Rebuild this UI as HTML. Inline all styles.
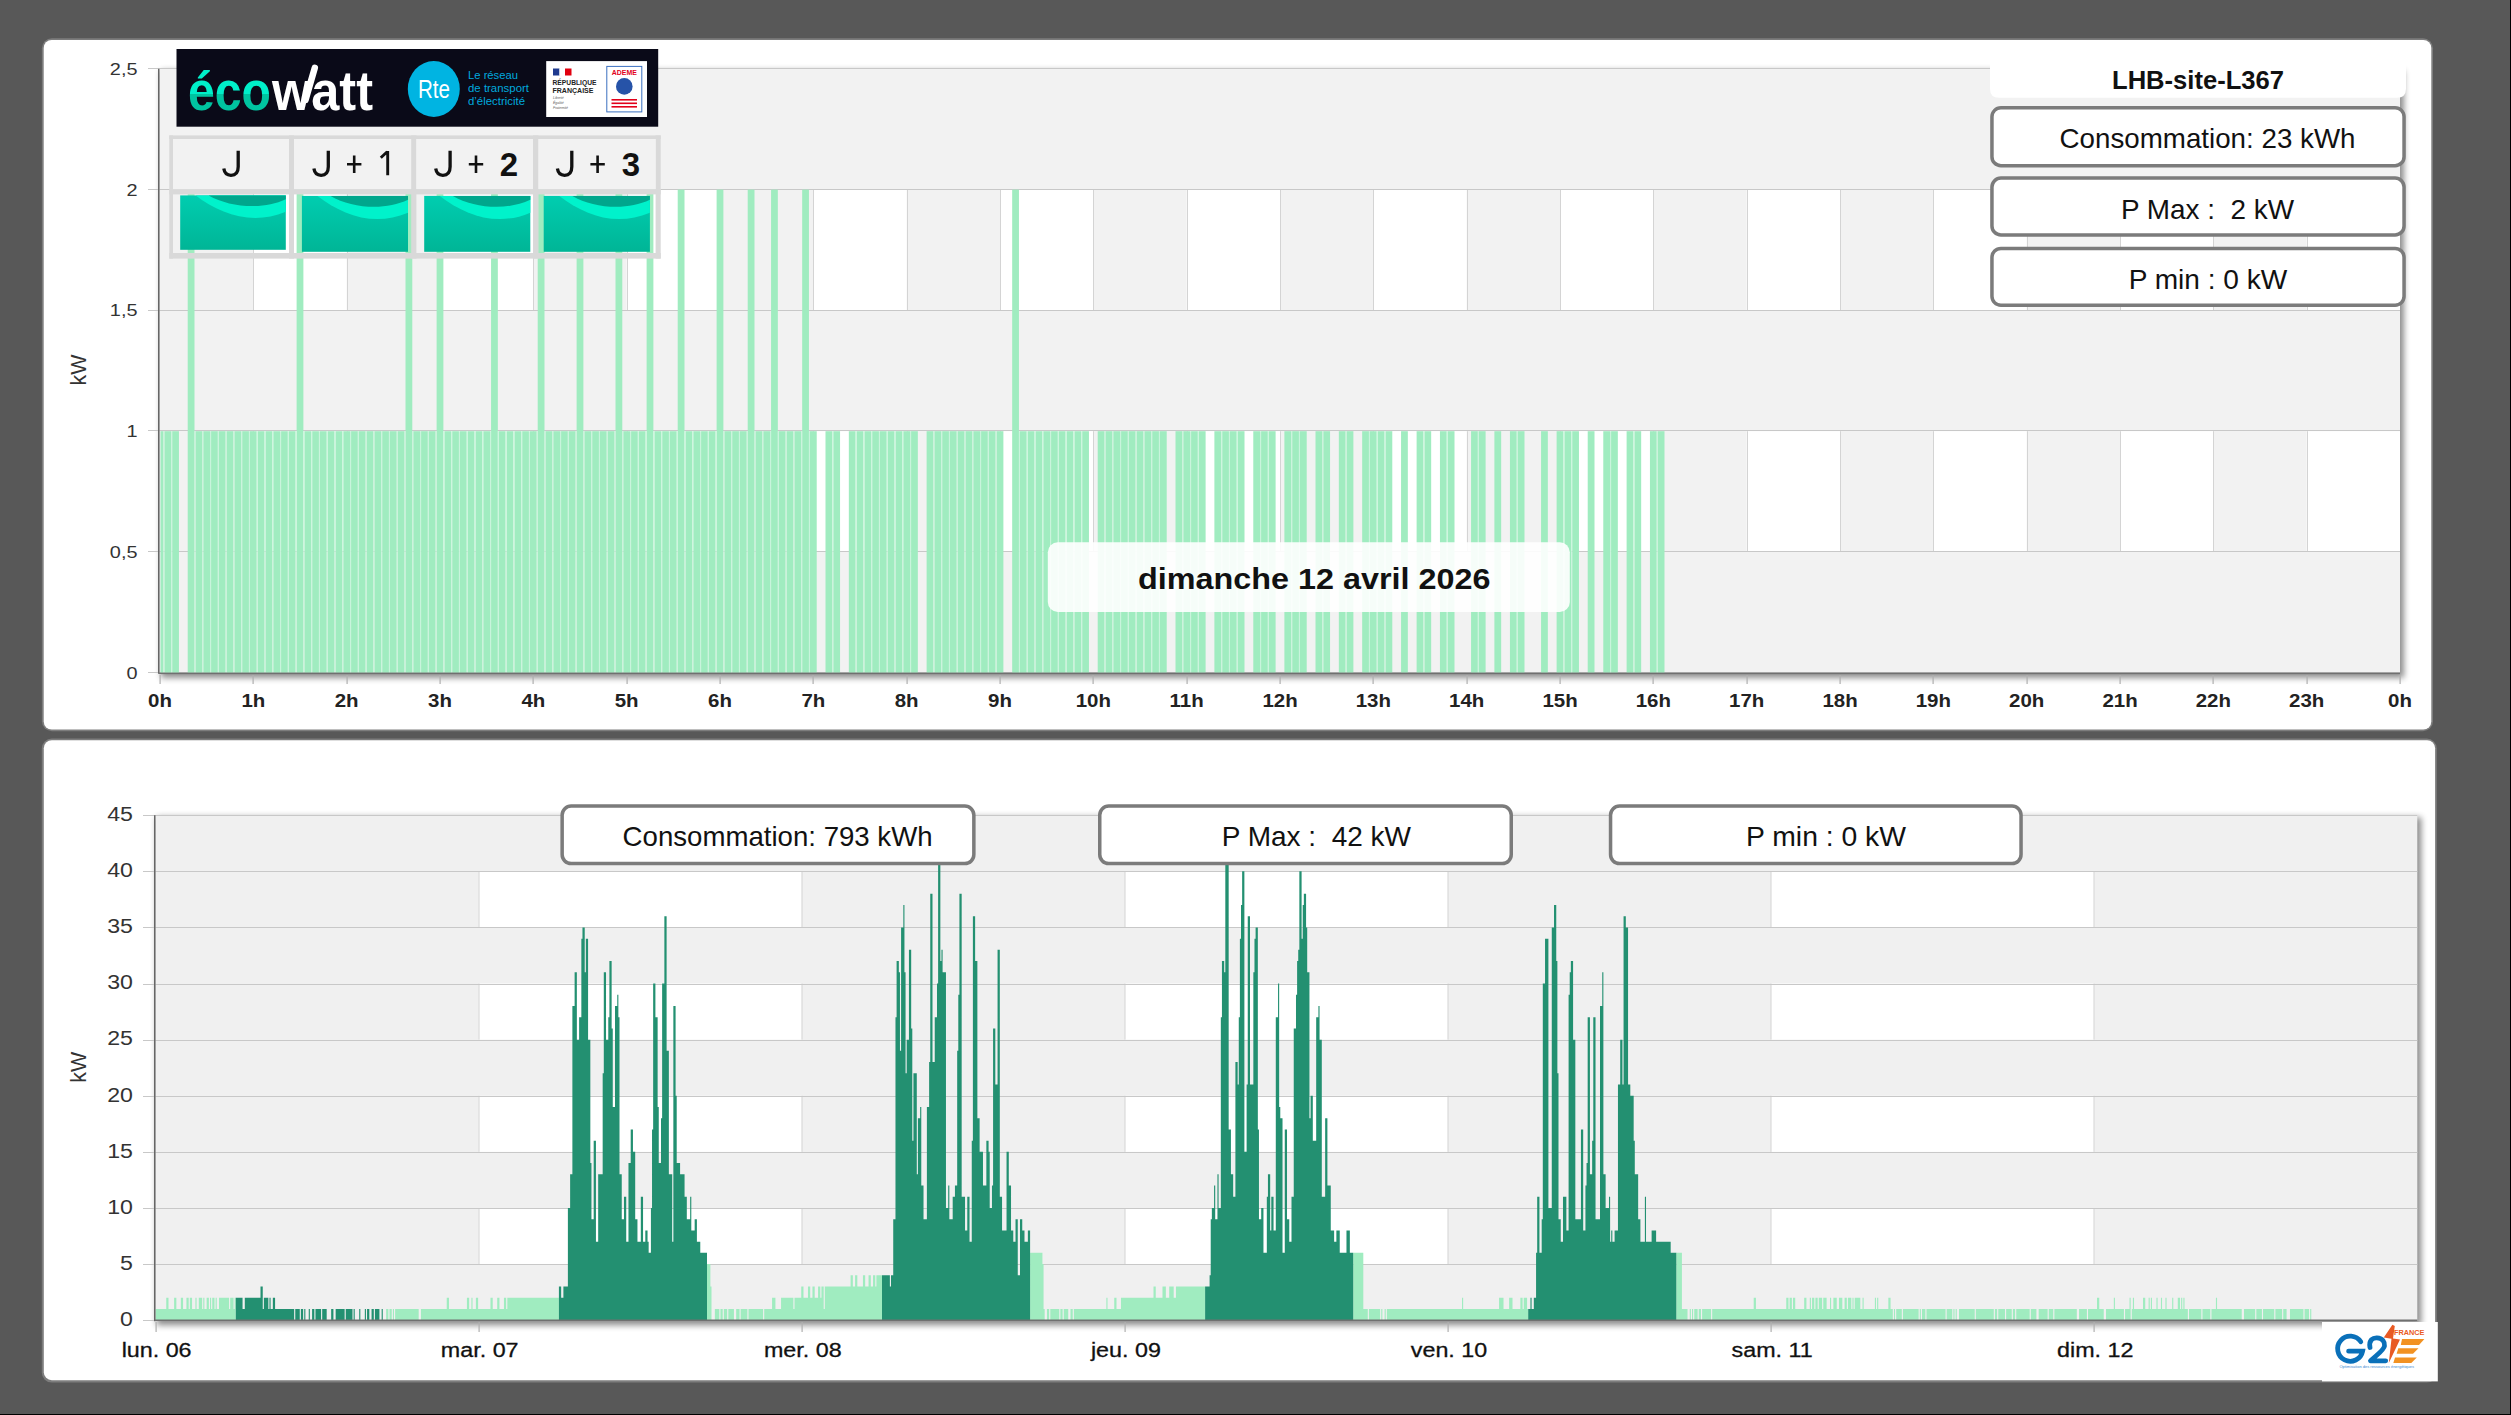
<!DOCTYPE html><html><head><meta charset="utf-8"><title>chart</title><style>html,body{margin:0;padding:0;background:#585858;width:2511px;height:1415px;overflow:hidden}svg{position:absolute;left:0;top:0;display:block}</style></head><body>
<svg width="2511" height="1415" viewBox="0 0 2511 1415" font-family="Liberation Sans, sans-serif">
<defs><linearGradient id="tealg" x1="0" y1="0" x2="0" y2="1"><stop offset="0" stop-color="#00cdb0"/><stop offset="1" stop-color="#00b596"/></linearGradient><linearGradient id="ecog" x1="0" y1="0" x2="0" y2="1"><stop offset="0" stop-color="#00efc9"/><stop offset="0.56" stop-color="#00efc9"/><stop offset="0.56" stop-color="#00c4a0"/><stop offset="1" stop-color="#00c4a0"/></linearGradient><filter id="blur1" x="-5%" y="-5%" width="110%" height="110%"><feGaussianBlur stdDeviation="1.2"/></filter><filter id="shb" x="-2%" y="-5%" width="104%" height="110%"><feGaussianBlur stdDeviation="3.2"/></filter></defs>
<rect x="0" y="0" width="2511" height="1415" fill="#585858"/>
<rect x="0" y="1414" width="2511" height="1" fill="#000"/>
<rect x="2510" y="0" width="1" height="1415" fill="#000"/>
<rect x="41.9" y="38.2" width="2391.1" height="693.1" rx="10" fill="#7d7d7d"/>
<rect x="43.7" y="40" width="2387.6" height="689.6" rx="8" fill="#fff"/>
<rect x="41.8" y="738.5" width="2395" height="644.1" rx="10" fill="#7d7d7d"/>
<rect x="43.8" y="740.2" width="2391.3" height="640" rx="8" fill="#fff"/>
<rect x="161.0" y="70.8" width="2243.0" height="607" fill="#000" opacity="0.45" filter="url(#shb)"/>
<rect x="160.0" y="68.8" width="2240.0" height="604" fill="#f2f2f2"/>
<rect x="253.33" y="431.2" width="93.33" height="120.8" fill="#fff"/>
<rect x="440" y="431.2" width="93.33" height="120.8" fill="#fff"/>
<rect x="626.67" y="431.2" width="93.33" height="120.8" fill="#fff"/>
<rect x="813.33" y="431.2" width="93.33" height="120.8" fill="#fff"/>
<rect x="1000" y="431.2" width="93.33" height="120.8" fill="#fff"/>
<rect x="1186.67" y="431.2" width="93.33" height="120.8" fill="#fff"/>
<rect x="1373.33" y="431.2" width="93.33" height="120.8" fill="#fff"/>
<rect x="1560" y="431.2" width="93.33" height="120.8" fill="#fff"/>
<rect x="1746.67" y="431.2" width="93.33" height="120.8" fill="#fff"/>
<rect x="1933.33" y="431.2" width="93.33" height="120.8" fill="#fff"/>
<rect x="2120" y="431.2" width="93.33" height="120.8" fill="#fff"/>
<rect x="2306.67" y="431.2" width="93.33" height="120.8" fill="#fff"/>
<rect x="253.33" y="189.6" width="93.33" height="120.8" fill="#fff"/>
<rect x="440" y="189.6" width="93.33" height="120.8" fill="#fff"/>
<rect x="626.67" y="189.6" width="93.33" height="120.8" fill="#fff"/>
<rect x="813.33" y="189.6" width="93.33" height="120.8" fill="#fff"/>
<rect x="1000" y="189.6" width="93.33" height="120.8" fill="#fff"/>
<rect x="1186.67" y="189.6" width="93.33" height="120.8" fill="#fff"/>
<rect x="1373.33" y="189.6" width="93.33" height="120.8" fill="#fff"/>
<rect x="1560" y="189.6" width="93.33" height="120.8" fill="#fff"/>
<rect x="1746.67" y="189.6" width="93.33" height="120.8" fill="#fff"/>
<rect x="1933.33" y="189.6" width="93.33" height="120.8" fill="#fff"/>
<rect x="2120" y="189.6" width="93.33" height="120.8" fill="#fff"/>
<rect x="2306.67" y="189.6" width="93.33" height="120.8" fill="#fff"/>
<rect x="253.0" y="431.2" width="1" height="120.8" fill="#d4d4d4"/>
<rect x="347.0" y="431.2" width="1" height="120.8" fill="#d4d4d4"/>
<rect x="440.0" y="431.2" width="1" height="120.8" fill="#d4d4d4"/>
<rect x="533.0" y="431.2" width="1" height="120.8" fill="#d4d4d4"/>
<rect x="627.0" y="431.2" width="1" height="120.8" fill="#d4d4d4"/>
<rect x="720.0" y="431.2" width="1" height="120.8" fill="#d4d4d4"/>
<rect x="813.0" y="431.2" width="1" height="120.8" fill="#d4d4d4"/>
<rect x="907.0" y="431.2" width="1" height="120.8" fill="#d4d4d4"/>
<rect x="1000.0" y="431.2" width="1" height="120.8" fill="#d4d4d4"/>
<rect x="1093.0" y="431.2" width="1" height="120.8" fill="#d4d4d4"/>
<rect x="1187.0" y="431.2" width="1" height="120.8" fill="#d4d4d4"/>
<rect x="1280.0" y="431.2" width="1" height="120.8" fill="#d4d4d4"/>
<rect x="1373.0" y="431.2" width="1" height="120.8" fill="#d4d4d4"/>
<rect x="1467.0" y="431.2" width="1" height="120.8" fill="#d4d4d4"/>
<rect x="1560.0" y="431.2" width="1" height="120.8" fill="#d4d4d4"/>
<rect x="1653.0" y="431.2" width="1" height="120.8" fill="#d4d4d4"/>
<rect x="1747.0" y="431.2" width="1" height="120.8" fill="#d4d4d4"/>
<rect x="1840.0" y="431.2" width="1" height="120.8" fill="#d4d4d4"/>
<rect x="1933.0" y="431.2" width="1" height="120.8" fill="#d4d4d4"/>
<rect x="2027.0" y="431.2" width="1" height="120.8" fill="#d4d4d4"/>
<rect x="2120.0" y="431.2" width="1" height="120.8" fill="#d4d4d4"/>
<rect x="2213.0" y="431.2" width="1" height="120.8" fill="#d4d4d4"/>
<rect x="2307.0" y="431.2" width="1" height="120.8" fill="#d4d4d4"/>
<rect x="253.0" y="189.6" width="1" height="120.8" fill="#d4d4d4"/>
<rect x="347.0" y="189.6" width="1" height="120.8" fill="#d4d4d4"/>
<rect x="440.0" y="189.6" width="1" height="120.8" fill="#d4d4d4"/>
<rect x="533.0" y="189.6" width="1" height="120.8" fill="#d4d4d4"/>
<rect x="627.0" y="189.6" width="1" height="120.8" fill="#d4d4d4"/>
<rect x="720.0" y="189.6" width="1" height="120.8" fill="#d4d4d4"/>
<rect x="813.0" y="189.6" width="1" height="120.8" fill="#d4d4d4"/>
<rect x="907.0" y="189.6" width="1" height="120.8" fill="#d4d4d4"/>
<rect x="1000.0" y="189.6" width="1" height="120.8" fill="#d4d4d4"/>
<rect x="1093.0" y="189.6" width="1" height="120.8" fill="#d4d4d4"/>
<rect x="1187.0" y="189.6" width="1" height="120.8" fill="#d4d4d4"/>
<rect x="1280.0" y="189.6" width="1" height="120.8" fill="#d4d4d4"/>
<rect x="1373.0" y="189.6" width="1" height="120.8" fill="#d4d4d4"/>
<rect x="1467.0" y="189.6" width="1" height="120.8" fill="#d4d4d4"/>
<rect x="1560.0" y="189.6" width="1" height="120.8" fill="#d4d4d4"/>
<rect x="1653.0" y="189.6" width="1" height="120.8" fill="#d4d4d4"/>
<rect x="1747.0" y="189.6" width="1" height="120.8" fill="#d4d4d4"/>
<rect x="1840.0" y="189.6" width="1" height="120.8" fill="#d4d4d4"/>
<rect x="1933.0" y="189.6" width="1" height="120.8" fill="#d4d4d4"/>
<rect x="2027.0" y="189.6" width="1" height="120.8" fill="#d4d4d4"/>
<rect x="2120.0" y="189.6" width="1" height="120.8" fill="#d4d4d4"/>
<rect x="2213.0" y="189.6" width="1" height="120.8" fill="#d4d4d4"/>
<rect x="2307.0" y="189.6" width="1" height="120.8" fill="#d4d4d4"/>
<rect x="148" y="672" width="2252.0" height="1" fill="#c8c8c8"/>
<rect x="148" y="551" width="2252.0" height="1" fill="#c8c8c8"/>
<rect x="148" y="430" width="2252.0" height="1" fill="#c8c8c8"/>
<rect x="148" y="310" width="2252.0" height="1" fill="#c8c8c8"/>
<rect x="148" y="189" width="2252.0" height="1" fill="#c8c8c8"/>
<rect x="148" y="68" width="2252.0" height="1" fill="#c8c8c8"/>
<g fill="#a0ecc0">
<rect x="160.5" y="431.2" width="2.89" height="241.6"/>
<rect x="164.39" y="431.2" width="6.78" height="241.6"/>
<rect x="172.17" y="431.2" width="6.78" height="241.6"/>
<rect x="187.72" y="189.6" width="6.78" height="483.2"/>
<rect x="195.5" y="431.2" width="6.78" height="241.6"/>
<rect x="203.28" y="431.2" width="6.78" height="241.6"/>
<rect x="211.06" y="431.2" width="6.78" height="241.6"/>
<rect x="218.83" y="431.2" width="6.78" height="241.6"/>
<rect x="226.61" y="431.2" width="6.78" height="241.6"/>
<rect x="234.39" y="431.2" width="6.78" height="241.6"/>
<rect x="242.17" y="431.2" width="6.78" height="241.6"/>
<rect x="249.94" y="431.2" width="6.78" height="241.6"/>
<rect x="257.72" y="431.2" width="6.78" height="241.6"/>
<rect x="265.5" y="431.2" width="6.78" height="241.6"/>
<rect x="273.28" y="431.2" width="6.78" height="241.6"/>
<rect x="281.06" y="431.2" width="6.78" height="241.6"/>
<rect x="288.83" y="431.2" width="6.78" height="241.6"/>
<rect x="296.61" y="189.6" width="6.78" height="483.2"/>
<rect x="304.39" y="431.2" width="6.78" height="241.6"/>
<rect x="312.17" y="431.2" width="6.78" height="241.6"/>
<rect x="319.94" y="431.2" width="6.78" height="241.6"/>
<rect x="327.72" y="431.2" width="6.78" height="241.6"/>
<rect x="335.5" y="431.2" width="6.78" height="241.6"/>
<rect x="343.28" y="431.2" width="6.78" height="241.6"/>
<rect x="351.06" y="431.2" width="6.78" height="241.6"/>
<rect x="358.83" y="431.2" width="6.78" height="241.6"/>
<rect x="366.61" y="431.2" width="6.78" height="241.6"/>
<rect x="374.39" y="431.2" width="6.78" height="241.6"/>
<rect x="382.17" y="431.2" width="6.78" height="241.6"/>
<rect x="389.94" y="431.2" width="6.78" height="241.6"/>
<rect x="397.72" y="431.2" width="6.78" height="241.6"/>
<rect x="405.5" y="189.6" width="6.78" height="483.2"/>
<rect x="413.28" y="431.2" width="6.78" height="241.6"/>
<rect x="421.06" y="431.2" width="6.78" height="241.6"/>
<rect x="428.83" y="431.2" width="6.78" height="241.6"/>
<rect x="436.61" y="189.6" width="6.78" height="483.2"/>
<rect x="444.39" y="431.2" width="6.78" height="241.6"/>
<rect x="452.17" y="431.2" width="6.78" height="241.6"/>
<rect x="459.94" y="431.2" width="6.78" height="241.6"/>
<rect x="467.72" y="431.2" width="6.78" height="241.6"/>
<rect x="475.5" y="431.2" width="6.78" height="241.6"/>
<rect x="483.28" y="431.2" width="6.78" height="241.6"/>
<rect x="491.06" y="189.6" width="6.78" height="483.2"/>
<rect x="498.83" y="431.2" width="6.78" height="241.6"/>
<rect x="506.61" y="431.2" width="6.78" height="241.6"/>
<rect x="514.39" y="431.2" width="6.78" height="241.6"/>
<rect x="522.17" y="431.2" width="6.78" height="241.6"/>
<rect x="529.94" y="431.2" width="6.78" height="241.6"/>
<rect x="537.72" y="189.6" width="6.78" height="483.2"/>
<rect x="545.5" y="431.2" width="6.78" height="241.6"/>
<rect x="553.28" y="431.2" width="6.78" height="241.6"/>
<rect x="561.06" y="431.2" width="6.78" height="241.6"/>
<rect x="568.83" y="431.2" width="6.78" height="241.6"/>
<rect x="576.61" y="189.6" width="6.78" height="483.2"/>
<rect x="584.39" y="431.2" width="6.78" height="241.6"/>
<rect x="592.17" y="431.2" width="6.78" height="241.6"/>
<rect x="599.94" y="431.2" width="6.78" height="241.6"/>
<rect x="607.72" y="431.2" width="6.78" height="241.6"/>
<rect x="615.5" y="189.6" width="6.78" height="483.2"/>
<rect x="623.28" y="431.2" width="6.78" height="241.6"/>
<rect x="631.06" y="431.2" width="6.78" height="241.6"/>
<rect x="638.83" y="431.2" width="6.78" height="241.6"/>
<rect x="646.61" y="189.6" width="6.78" height="483.2"/>
<rect x="654.39" y="431.2" width="6.78" height="241.6"/>
<rect x="662.17" y="431.2" width="6.78" height="241.6"/>
<rect x="669.94" y="431.2" width="6.78" height="241.6"/>
<rect x="677.72" y="189.6" width="6.78" height="483.2"/>
<rect x="685.5" y="431.2" width="6.78" height="241.6"/>
<rect x="693.28" y="431.2" width="6.78" height="241.6"/>
<rect x="701.06" y="431.2" width="6.78" height="241.6"/>
<rect x="708.83" y="431.2" width="6.78" height="241.6"/>
<rect x="716.61" y="189.6" width="6.78" height="483.2"/>
<rect x="724.39" y="431.2" width="6.78" height="241.6"/>
<rect x="732.17" y="431.2" width="6.78" height="241.6"/>
<rect x="739.94" y="431.2" width="6.78" height="241.6"/>
<rect x="747.72" y="189.6" width="6.78" height="483.2"/>
<rect x="755.5" y="431.2" width="6.78" height="241.6"/>
<rect x="763.28" y="431.2" width="6.78" height="241.6"/>
<rect x="771.06" y="189.6" width="6.78" height="483.2"/>
<rect x="778.83" y="431.2" width="6.78" height="241.6"/>
<rect x="786.61" y="431.2" width="6.78" height="241.6"/>
<rect x="794.39" y="431.2" width="6.78" height="241.6"/>
<rect x="802.17" y="189.6" width="6.78" height="483.2"/>
<rect x="809.94" y="431.2" width="6.78" height="241.6"/>
<rect x="825.5" y="431.2" width="6.78" height="241.6"/>
<rect x="833.28" y="431.2" width="6.78" height="241.6"/>
<rect x="848.83" y="431.2" width="6.78" height="241.6"/>
<rect x="856.61" y="431.2" width="6.78" height="241.6"/>
<rect x="864.39" y="431.2" width="6.78" height="241.6"/>
<rect x="872.17" y="431.2" width="6.78" height="241.6"/>
<rect x="879.94" y="431.2" width="6.78" height="241.6"/>
<rect x="887.72" y="431.2" width="6.78" height="241.6"/>
<rect x="895.5" y="431.2" width="6.78" height="241.6"/>
<rect x="903.28" y="431.2" width="6.78" height="241.6"/>
<rect x="911.06" y="431.2" width="6.78" height="241.6"/>
<rect x="926.61" y="431.2" width="6.78" height="241.6"/>
<rect x="934.39" y="431.2" width="6.78" height="241.6"/>
<rect x="942.17" y="431.2" width="6.78" height="241.6"/>
<rect x="949.94" y="431.2" width="6.78" height="241.6"/>
<rect x="957.72" y="431.2" width="6.78" height="241.6"/>
<rect x="965.5" y="431.2" width="6.78" height="241.6"/>
<rect x="973.28" y="431.2" width="6.78" height="241.6"/>
<rect x="981.06" y="431.2" width="6.78" height="241.6"/>
<rect x="988.83" y="431.2" width="6.78" height="241.6"/>
<rect x="996.61" y="431.2" width="6.78" height="241.6"/>
<rect x="1012.17" y="189.6" width="6.78" height="483.2"/>
<rect x="1019.94" y="431.2" width="6.78" height="241.6"/>
<rect x="1027.72" y="431.2" width="6.78" height="241.6"/>
<rect x="1035.5" y="431.2" width="6.78" height="241.6"/>
<rect x="1043.28" y="431.2" width="6.78" height="241.6"/>
<rect x="1051.06" y="431.2" width="6.78" height="241.6"/>
<rect x="1058.83" y="431.2" width="6.78" height="241.6"/>
<rect x="1066.61" y="431.2" width="6.78" height="241.6"/>
<rect x="1074.39" y="431.2" width="6.78" height="241.6"/>
<rect x="1082.17" y="431.2" width="6.78" height="241.6"/>
<rect x="1097.72" y="431.2" width="6.78" height="241.6"/>
<rect x="1105.5" y="431.2" width="6.78" height="241.6"/>
<rect x="1113.28" y="431.2" width="6.78" height="241.6"/>
<rect x="1121.06" y="431.2" width="6.78" height="241.6"/>
<rect x="1128.83" y="431.2" width="6.78" height="241.6"/>
<rect x="1136.61" y="431.2" width="6.78" height="241.6"/>
<rect x="1144.39" y="431.2" width="6.78" height="241.6"/>
<rect x="1152.17" y="431.2" width="6.78" height="241.6"/>
<rect x="1159.94" y="431.2" width="6.78" height="241.6"/>
<rect x="1175.5" y="431.2" width="6.78" height="241.6"/>
<rect x="1183.28" y="431.2" width="6.78" height="241.6"/>
<rect x="1191.06" y="431.2" width="6.78" height="241.6"/>
<rect x="1198.83" y="431.2" width="6.78" height="241.6"/>
<rect x="1214.39" y="431.2" width="6.78" height="241.6"/>
<rect x="1222.17" y="431.2" width="6.78" height="241.6"/>
<rect x="1229.94" y="431.2" width="6.78" height="241.6"/>
<rect x="1237.72" y="431.2" width="6.78" height="241.6"/>
<rect x="1253.28" y="431.2" width="6.78" height="241.6"/>
<rect x="1261.06" y="431.2" width="6.78" height="241.6"/>
<rect x="1268.83" y="431.2" width="6.78" height="241.6"/>
<rect x="1284.39" y="431.2" width="6.78" height="241.6"/>
<rect x="1292.17" y="431.2" width="6.78" height="241.6"/>
<rect x="1299.94" y="431.2" width="6.78" height="241.6"/>
<rect x="1315.5" y="431.2" width="6.78" height="241.6"/>
<rect x="1323.28" y="431.2" width="6.78" height="241.6"/>
<rect x="1338.83" y="431.2" width="6.78" height="241.6"/>
<rect x="1346.61" y="431.2" width="6.78" height="241.6"/>
<rect x="1362.17" y="431.2" width="6.78" height="241.6"/>
<rect x="1369.94" y="431.2" width="6.78" height="241.6"/>
<rect x="1377.72" y="431.2" width="6.78" height="241.6"/>
<rect x="1385.5" y="431.2" width="6.78" height="241.6"/>
<rect x="1401.06" y="431.2" width="6.78" height="241.6"/>
<rect x="1416.61" y="431.2" width="6.78" height="241.6"/>
<rect x="1424.39" y="431.2" width="6.78" height="241.6"/>
<rect x="1439.94" y="431.2" width="6.78" height="241.6"/>
<rect x="1447.72" y="431.2" width="6.78" height="241.6"/>
<rect x="1471.06" y="431.2" width="6.78" height="241.6"/>
<rect x="1478.83" y="431.2" width="6.78" height="241.6"/>
<rect x="1494.39" y="431.2" width="6.78" height="241.6"/>
<rect x="1509.94" y="431.2" width="6.78" height="241.6"/>
<rect x="1517.72" y="431.2" width="6.78" height="241.6"/>
<rect x="1541.06" y="431.2" width="6.78" height="241.6"/>
<rect x="1556.61" y="431.2" width="6.78" height="241.6"/>
<rect x="1564.39" y="431.2" width="6.78" height="241.6"/>
<rect x="1572.17" y="431.2" width="6.78" height="241.6"/>
<rect x="1587.72" y="431.2" width="6.78" height="241.6"/>
<rect x="1603.28" y="431.2" width="6.78" height="241.6"/>
<rect x="1611.06" y="431.2" width="6.78" height="241.6"/>
<rect x="1626.61" y="431.2" width="6.78" height="241.6"/>
<rect x="1634.39" y="431.2" width="6.78" height="241.6"/>
<rect x="1649.94" y="431.2" width="6.78" height="241.6"/>
<rect x="1657.72" y="431.2" width="6.78" height="241.6"/>
</g>
<g fill="#c6f4da">
<rect x="163.39" y="431.2" width="1" height="241.6"/>
<rect x="171.17" y="431.2" width="1" height="241.6"/>
<rect x="194.5" y="431.2" width="1" height="241.6"/>
<rect x="202.28" y="431.2" width="1" height="241.6"/>
<rect x="210.06" y="431.2" width="1" height="241.6"/>
<rect x="217.83" y="431.2" width="1" height="241.6"/>
<rect x="225.61" y="431.2" width="1" height="241.6"/>
<rect x="233.39" y="431.2" width="1" height="241.6"/>
<rect x="241.17" y="431.2" width="1" height="241.6"/>
<rect x="248.94" y="431.2" width="1" height="241.6"/>
<rect x="256.72" y="431.2" width="1" height="241.6"/>
<rect x="264.5" y="431.2" width="1" height="241.6"/>
<rect x="272.28" y="431.2" width="1" height="241.6"/>
<rect x="280.06" y="431.2" width="1" height="241.6"/>
<rect x="287.83" y="431.2" width="1" height="241.6"/>
<rect x="295.61" y="431.2" width="1" height="241.6"/>
<rect x="303.39" y="431.2" width="1" height="241.6"/>
<rect x="311.17" y="431.2" width="1" height="241.6"/>
<rect x="318.94" y="431.2" width="1" height="241.6"/>
<rect x="326.72" y="431.2" width="1" height="241.6"/>
<rect x="334.5" y="431.2" width="1" height="241.6"/>
<rect x="342.28" y="431.2" width="1" height="241.6"/>
<rect x="350.06" y="431.2" width="1" height="241.6"/>
<rect x="357.83" y="431.2" width="1" height="241.6"/>
<rect x="365.61" y="431.2" width="1" height="241.6"/>
<rect x="373.39" y="431.2" width="1" height="241.6"/>
<rect x="381.17" y="431.2" width="1" height="241.6"/>
<rect x="388.94" y="431.2" width="1" height="241.6"/>
<rect x="396.72" y="431.2" width="1" height="241.6"/>
<rect x="404.5" y="431.2" width="1" height="241.6"/>
<rect x="412.28" y="431.2" width="1" height="241.6"/>
<rect x="420.06" y="431.2" width="1" height="241.6"/>
<rect x="427.83" y="431.2" width="1" height="241.6"/>
<rect x="435.61" y="431.2" width="1" height="241.6"/>
<rect x="443.39" y="431.2" width="1" height="241.6"/>
<rect x="451.17" y="431.2" width="1" height="241.6"/>
<rect x="458.94" y="431.2" width="1" height="241.6"/>
<rect x="466.72" y="431.2" width="1" height="241.6"/>
<rect x="474.5" y="431.2" width="1" height="241.6"/>
<rect x="482.28" y="431.2" width="1" height="241.6"/>
<rect x="490.06" y="431.2" width="1" height="241.6"/>
<rect x="497.83" y="431.2" width="1" height="241.6"/>
<rect x="505.61" y="431.2" width="1" height="241.6"/>
<rect x="513.39" y="431.2" width="1" height="241.6"/>
<rect x="521.17" y="431.2" width="1" height="241.6"/>
<rect x="528.94" y="431.2" width="1" height="241.6"/>
<rect x="536.72" y="431.2" width="1" height="241.6"/>
<rect x="544.5" y="431.2" width="1" height="241.6"/>
<rect x="552.28" y="431.2" width="1" height="241.6"/>
<rect x="560.06" y="431.2" width="1" height="241.6"/>
<rect x="567.83" y="431.2" width="1" height="241.6"/>
<rect x="575.61" y="431.2" width="1" height="241.6"/>
<rect x="583.39" y="431.2" width="1" height="241.6"/>
<rect x="591.17" y="431.2" width="1" height="241.6"/>
<rect x="598.94" y="431.2" width="1" height="241.6"/>
<rect x="606.72" y="431.2" width="1" height="241.6"/>
<rect x="614.5" y="431.2" width="1" height="241.6"/>
<rect x="622.28" y="431.2" width="1" height="241.6"/>
<rect x="630.06" y="431.2" width="1" height="241.6"/>
<rect x="637.83" y="431.2" width="1" height="241.6"/>
<rect x="645.61" y="431.2" width="1" height="241.6"/>
<rect x="653.39" y="431.2" width="1" height="241.6"/>
<rect x="661.17" y="431.2" width="1" height="241.6"/>
<rect x="668.94" y="431.2" width="1" height="241.6"/>
<rect x="676.72" y="431.2" width="1" height="241.6"/>
<rect x="684.5" y="431.2" width="1" height="241.6"/>
<rect x="692.28" y="431.2" width="1" height="241.6"/>
<rect x="700.06" y="431.2" width="1" height="241.6"/>
<rect x="707.83" y="431.2" width="1" height="241.6"/>
<rect x="715.61" y="431.2" width="1" height="241.6"/>
<rect x="723.39" y="431.2" width="1" height="241.6"/>
<rect x="731.17" y="431.2" width="1" height="241.6"/>
<rect x="738.94" y="431.2" width="1" height="241.6"/>
<rect x="746.72" y="431.2" width="1" height="241.6"/>
<rect x="754.5" y="431.2" width="1" height="241.6"/>
<rect x="762.28" y="431.2" width="1" height="241.6"/>
<rect x="770.06" y="431.2" width="1" height="241.6"/>
<rect x="777.83" y="431.2" width="1" height="241.6"/>
<rect x="785.61" y="431.2" width="1" height="241.6"/>
<rect x="793.39" y="431.2" width="1" height="241.6"/>
<rect x="801.17" y="431.2" width="1" height="241.6"/>
<rect x="808.94" y="431.2" width="1" height="241.6"/>
<rect x="832.28" y="431.2" width="1" height="241.6"/>
<rect x="855.61" y="431.2" width="1" height="241.6"/>
<rect x="863.39" y="431.2" width="1" height="241.6"/>
<rect x="871.17" y="431.2" width="1" height="241.6"/>
<rect x="878.94" y="431.2" width="1" height="241.6"/>
<rect x="886.72" y="431.2" width="1" height="241.6"/>
<rect x="894.5" y="431.2" width="1" height="241.6"/>
<rect x="902.28" y="431.2" width="1" height="241.6"/>
<rect x="910.06" y="431.2" width="1" height="241.6"/>
<rect x="933.39" y="431.2" width="1" height="241.6"/>
<rect x="941.17" y="431.2" width="1" height="241.6"/>
<rect x="948.94" y="431.2" width="1" height="241.6"/>
<rect x="956.72" y="431.2" width="1" height="241.6"/>
<rect x="964.5" y="431.2" width="1" height="241.6"/>
<rect x="972.28" y="431.2" width="1" height="241.6"/>
<rect x="980.06" y="431.2" width="1" height="241.6"/>
<rect x="987.83" y="431.2" width="1" height="241.6"/>
<rect x="995.61" y="431.2" width="1" height="241.6"/>
<rect x="1018.94" y="431.2" width="1" height="241.6"/>
<rect x="1026.72" y="431.2" width="1" height="241.6"/>
<rect x="1034.5" y="431.2" width="1" height="241.6"/>
<rect x="1042.28" y="431.2" width="1" height="241.6"/>
<rect x="1050.06" y="431.2" width="1" height="241.6"/>
<rect x="1057.83" y="431.2" width="1" height="241.6"/>
<rect x="1065.61" y="431.2" width="1" height="241.6"/>
<rect x="1073.39" y="431.2" width="1" height="241.6"/>
<rect x="1081.17" y="431.2" width="1" height="241.6"/>
<rect x="1104.5" y="431.2" width="1" height="241.6"/>
<rect x="1112.28" y="431.2" width="1" height="241.6"/>
<rect x="1120.06" y="431.2" width="1" height="241.6"/>
<rect x="1127.83" y="431.2" width="1" height="241.6"/>
<rect x="1135.61" y="431.2" width="1" height="241.6"/>
<rect x="1143.39" y="431.2" width="1" height="241.6"/>
<rect x="1151.17" y="431.2" width="1" height="241.6"/>
<rect x="1158.94" y="431.2" width="1" height="241.6"/>
<rect x="1182.28" y="431.2" width="1" height="241.6"/>
<rect x="1190.06" y="431.2" width="1" height="241.6"/>
<rect x="1197.83" y="431.2" width="1" height="241.6"/>
<rect x="1221.17" y="431.2" width="1" height="241.6"/>
<rect x="1228.94" y="431.2" width="1" height="241.6"/>
<rect x="1236.72" y="431.2" width="1" height="241.6"/>
<rect x="1260.06" y="431.2" width="1" height="241.6"/>
<rect x="1267.83" y="431.2" width="1" height="241.6"/>
<rect x="1291.17" y="431.2" width="1" height="241.6"/>
<rect x="1298.94" y="431.2" width="1" height="241.6"/>
<rect x="1322.28" y="431.2" width="1" height="241.6"/>
<rect x="1345.61" y="431.2" width="1" height="241.6"/>
<rect x="1368.94" y="431.2" width="1" height="241.6"/>
<rect x="1376.72" y="431.2" width="1" height="241.6"/>
<rect x="1384.5" y="431.2" width="1" height="241.6"/>
<rect x="1423.39" y="431.2" width="1" height="241.6"/>
<rect x="1446.72" y="431.2" width="1" height="241.6"/>
<rect x="1477.83" y="431.2" width="1" height="241.6"/>
<rect x="1516.72" y="431.2" width="1" height="241.6"/>
<rect x="1563.39" y="431.2" width="1" height="241.6"/>
<rect x="1571.17" y="431.2" width="1" height="241.6"/>
<rect x="1610.06" y="431.2" width="1" height="241.6"/>
<rect x="1633.39" y="431.2" width="1" height="241.6"/>
<rect x="1656.72" y="431.2" width="1" height="241.6"/>
</g>
<rect x="158" y="68.8" width="1.5" height="605" fill="#666"/>
<rect x="159" y="672.6" width="2241.0" height="1.5" fill="#707070"/>
<rect x="159.5" y="675" width="1.2" height="9" fill="#b0b0b0"/>
<rect x="252.5" y="675" width="1.2" height="9" fill="#b0b0b0"/>
<rect x="346.5" y="675" width="1.2" height="9" fill="#b0b0b0"/>
<rect x="439.5" y="675" width="1.2" height="9" fill="#b0b0b0"/>
<rect x="532.5" y="675" width="1.2" height="9" fill="#b0b0b0"/>
<rect x="626.5" y="675" width="1.2" height="9" fill="#b0b0b0"/>
<rect x="719.5" y="675" width="1.2" height="9" fill="#b0b0b0"/>
<rect x="812.5" y="675" width="1.2" height="9" fill="#b0b0b0"/>
<rect x="906.5" y="675" width="1.2" height="9" fill="#b0b0b0"/>
<rect x="999.5" y="675" width="1.2" height="9" fill="#b0b0b0"/>
<rect x="1092.5" y="675" width="1.2" height="9" fill="#b0b0b0"/>
<rect x="1186.5" y="675" width="1.2" height="9" fill="#b0b0b0"/>
<rect x="1279.5" y="675" width="1.2" height="9" fill="#b0b0b0"/>
<rect x="1372.5" y="675" width="1.2" height="9" fill="#b0b0b0"/>
<rect x="1466.5" y="675" width="1.2" height="9" fill="#b0b0b0"/>
<rect x="1559.5" y="675" width="1.2" height="9" fill="#b0b0b0"/>
<rect x="1652.5" y="675" width="1.2" height="9" fill="#b0b0b0"/>
<rect x="1746.5" y="675" width="1.2" height="9" fill="#b0b0b0"/>
<rect x="1839.5" y="675" width="1.2" height="9" fill="#b0b0b0"/>
<rect x="1932.5" y="675" width="1.2" height="9" fill="#b0b0b0"/>
<rect x="2026.5" y="675" width="1.2" height="9" fill="#b0b0b0"/>
<rect x="2119.5" y="675" width="1.2" height="9" fill="#b0b0b0"/>
<rect x="2212.5" y="675" width="1.2" height="9" fill="#b0b0b0"/>
<rect x="2306.5" y="675" width="1.2" height="9" fill="#b0b0b0"/>
<rect x="2399.5" y="675" width="1.2" height="9" fill="#b0b0b0"/>
<text transform="translate(160,707) scale(1.17,1)" font-size="17.5" fill="#222" text-anchor="middle" font-weight="bold">0h</text>
<text transform="translate(253.33,707) scale(1.17,1)" font-size="17.5" fill="#222" text-anchor="middle" font-weight="bold">1h</text>
<text transform="translate(346.67,707) scale(1.17,1)" font-size="17.5" fill="#222" text-anchor="middle" font-weight="bold">2h</text>
<text transform="translate(440,707) scale(1.17,1)" font-size="17.5" fill="#222" text-anchor="middle" font-weight="bold">3h</text>
<text transform="translate(533.33,707) scale(1.17,1)" font-size="17.5" fill="#222" text-anchor="middle" font-weight="bold">4h</text>
<text transform="translate(626.67,707) scale(1.17,1)" font-size="17.5" fill="#222" text-anchor="middle" font-weight="bold">5h</text>
<text transform="translate(720,707) scale(1.17,1)" font-size="17.5" fill="#222" text-anchor="middle" font-weight="bold">6h</text>
<text transform="translate(813.33,707) scale(1.17,1)" font-size="17.5" fill="#222" text-anchor="middle" font-weight="bold">7h</text>
<text transform="translate(906.67,707) scale(1.17,1)" font-size="17.5" fill="#222" text-anchor="middle" font-weight="bold">8h</text>
<text transform="translate(1000,707) scale(1.17,1)" font-size="17.5" fill="#222" text-anchor="middle" font-weight="bold">9h</text>
<text transform="translate(1093.33,707) scale(1.17,1)" font-size="17.5" fill="#222" text-anchor="middle" font-weight="bold">10h</text>
<text transform="translate(1186.67,707) scale(1.17,1)" font-size="17.5" fill="#222" text-anchor="middle" font-weight="bold">11h</text>
<text transform="translate(1280,707) scale(1.17,1)" font-size="17.5" fill="#222" text-anchor="middle" font-weight="bold">12h</text>
<text transform="translate(1373.33,707) scale(1.17,1)" font-size="17.5" fill="#222" text-anchor="middle" font-weight="bold">13h</text>
<text transform="translate(1466.67,707) scale(1.17,1)" font-size="17.5" fill="#222" text-anchor="middle" font-weight="bold">14h</text>
<text transform="translate(1560,707) scale(1.17,1)" font-size="17.5" fill="#222" text-anchor="middle" font-weight="bold">15h</text>
<text transform="translate(1653.33,707) scale(1.17,1)" font-size="17.5" fill="#222" text-anchor="middle" font-weight="bold">16h</text>
<text transform="translate(1746.67,707) scale(1.17,1)" font-size="17.5" fill="#222" text-anchor="middle" font-weight="bold">17h</text>
<text transform="translate(1840,707) scale(1.17,1)" font-size="17.5" fill="#222" text-anchor="middle" font-weight="bold">18h</text>
<text transform="translate(1933.33,707) scale(1.17,1)" font-size="17.5" fill="#222" text-anchor="middle" font-weight="bold">19h</text>
<text transform="translate(2026.67,707) scale(1.17,1)" font-size="17.5" fill="#222" text-anchor="middle" font-weight="bold">20h</text>
<text transform="translate(2120,707) scale(1.17,1)" font-size="17.5" fill="#222" text-anchor="middle" font-weight="bold">21h</text>
<text transform="translate(2213.33,707) scale(1.17,1)" font-size="17.5" fill="#222" text-anchor="middle" font-weight="bold">22h</text>
<text transform="translate(2306.67,707) scale(1.17,1)" font-size="17.5" fill="#222" text-anchor="middle" font-weight="bold">23h</text>
<text transform="translate(2400,707) scale(1.17,1)" font-size="17.5" fill="#222" text-anchor="middle" font-weight="bold">0h</text>
<text transform="translate(137.5,678.8) scale(1.17,1)" font-size="17" fill="#333" text-anchor="end">0</text>
<text transform="translate(137.5,558) scale(1.17,1)" font-size="17" fill="#333" text-anchor="end">0,5</text>
<text transform="translate(137.5,437.2) scale(1.17,1)" font-size="17" fill="#333" text-anchor="end">1</text>
<text transform="translate(137.5,316.4) scale(1.17,1)" font-size="17" fill="#333" text-anchor="end">1,5</text>
<text transform="translate(137.5,195.6) scale(1.17,1)" font-size="17" fill="#333" text-anchor="end">2</text>
<text transform="translate(137.5,74.8) scale(1.17,1)" font-size="17" fill="#333" text-anchor="end">2,5</text>
<text transform="translate(85.5,370) rotate(-90)" font-size="21.5" fill="#333" text-anchor="middle">kW</text>
<rect x="156.6" y="817.21" width="2264.7" height="507.99" fill="#000" opacity="0.45" filter="url(#shb)"/>
<rect x="155.6" y="815.21" width="2261.7" height="504.99" fill="#f0f0f0"/>
<rect x="478.7" y="1207.98" width="323.1" height="56.11" fill="#fff"/>
<rect x="1124.9" y="1207.98" width="323.1" height="56.11" fill="#fff"/>
<rect x="1771.1" y="1207.98" width="323.1" height="56.11" fill="#fff"/>
<rect x="478.7" y="1095.76" width="323.1" height="56.11" fill="#fff"/>
<rect x="1124.9" y="1095.76" width="323.1" height="56.11" fill="#fff"/>
<rect x="1771.1" y="1095.76" width="323.1" height="56.11" fill="#fff"/>
<rect x="478.7" y="983.54" width="323.1" height="56.11" fill="#fff"/>
<rect x="1124.9" y="983.54" width="323.1" height="56.11" fill="#fff"/>
<rect x="1771.1" y="983.54" width="323.1" height="56.11" fill="#fff"/>
<rect x="478.7" y="871.32" width="323.1" height="56.11" fill="#fff"/>
<rect x="1124.9" y="871.32" width="323.1" height="56.11" fill="#fff"/>
<rect x="1771.1" y="871.32" width="323.1" height="56.11" fill="#fff"/>
<rect x="478.5" y="1207.98" width="1" height="56.11" fill="#d4d4d4"/>
<rect x="801.5" y="1207.98" width="1" height="56.11" fill="#d4d4d4"/>
<rect x="1124.5" y="1207.98" width="1" height="56.11" fill="#d4d4d4"/>
<rect x="1447.5" y="1207.98" width="1" height="56.11" fill="#d4d4d4"/>
<rect x="1770.5" y="1207.98" width="1" height="56.11" fill="#d4d4d4"/>
<rect x="2093.5" y="1207.98" width="1" height="56.11" fill="#d4d4d4"/>
<rect x="478.5" y="1095.76" width="1" height="56.11" fill="#d4d4d4"/>
<rect x="801.5" y="1095.76" width="1" height="56.11" fill="#d4d4d4"/>
<rect x="1124.5" y="1095.76" width="1" height="56.11" fill="#d4d4d4"/>
<rect x="1447.5" y="1095.76" width="1" height="56.11" fill="#d4d4d4"/>
<rect x="1770.5" y="1095.76" width="1" height="56.11" fill="#d4d4d4"/>
<rect x="2093.5" y="1095.76" width="1" height="56.11" fill="#d4d4d4"/>
<rect x="478.5" y="983.54" width="1" height="56.11" fill="#d4d4d4"/>
<rect x="801.5" y="983.54" width="1" height="56.11" fill="#d4d4d4"/>
<rect x="1124.5" y="983.54" width="1" height="56.11" fill="#d4d4d4"/>
<rect x="1447.5" y="983.54" width="1" height="56.11" fill="#d4d4d4"/>
<rect x="1770.5" y="983.54" width="1" height="56.11" fill="#d4d4d4"/>
<rect x="2093.5" y="983.54" width="1" height="56.11" fill="#d4d4d4"/>
<rect x="478.5" y="871.32" width="1" height="56.11" fill="#d4d4d4"/>
<rect x="801.5" y="871.32" width="1" height="56.11" fill="#d4d4d4"/>
<rect x="1124.5" y="871.32" width="1" height="56.11" fill="#d4d4d4"/>
<rect x="1447.5" y="871.32" width="1" height="56.11" fill="#d4d4d4"/>
<rect x="1770.5" y="871.32" width="1" height="56.11" fill="#d4d4d4"/>
<rect x="2093.5" y="871.32" width="1" height="56.11" fill="#d4d4d4"/>
<rect x="143" y="1320" width="2274.3" height="1" fill="#c8c8c8"/>
<rect x="143" y="1264" width="2274.3" height="1" fill="#c8c8c8"/>
<rect x="143" y="1208" width="2274.3" height="1" fill="#c8c8c8"/>
<rect x="143" y="1152" width="2274.3" height="1" fill="#c8c8c8"/>
<rect x="143" y="1096" width="2274.3" height="1" fill="#c8c8c8"/>
<rect x="143" y="1040" width="2274.3" height="1" fill="#c8c8c8"/>
<rect x="143" y="984" width="2274.3" height="1" fill="#c8c8c8"/>
<rect x="143" y="927" width="2274.3" height="1" fill="#c8c8c8"/>
<rect x="143" y="871" width="2274.3" height="1" fill="#c8c8c8"/>
<rect x="143" y="815" width="2274.3" height="1" fill="#c8c8c8"/>
<path fill="#a0ecc0" d="M155.6 1320.2V1308.98H156.16V1320.2ZM156.16 1320.2V1308.98H157.28V1320.2ZM157.28 1320.2V1308.98H158.4V1320.2ZM158.4 1320.2V1308.98H159.53V1320.2ZM159.53 1320.2V1308.98H160.65V1320.2ZM160.65 1320.2V1308.98H161.77V1320.2ZM161.77 1320.2V1308.98H162.89V1320.2ZM162.89 1320.2V1308.98H164.01V1320.2ZM164.01 1320.2V1308.98H165.14V1320.2ZM165.14 1320.2V1308.98H166.26V1320.2ZM166.26 1320.2V1297.76H167.38V1320.2ZM167.38 1320.2V1297.76H168.5V1320.2ZM168.5 1320.2V1308.98H169.62V1320.2ZM169.62 1320.2V1308.98H170.75V1320.2ZM170.75 1320.2V1308.98H171.87V1320.2ZM171.87 1320.2V1308.98H172.99V1320.2ZM172.99 1320.2V1308.98H174.11V1320.2ZM174.11 1320.2V1297.76H175.23V1320.2ZM175.23 1320.2V1297.76H176.35V1320.2ZM176.35 1320.2V1308.98H177.48V1320.2ZM177.48 1320.2V1308.98H178.6V1320.2ZM178.6 1320.2V1308.98H179.72V1320.2ZM179.72 1320.2V1308.98H180.84V1320.2ZM180.84 1320.2V1297.76H181.96V1320.2ZM181.96 1320.2V1297.76H183.09V1320.2ZM183.09 1320.2V1308.98H184.21V1320.2ZM184.21 1320.2V1308.98H185.33V1320.2ZM185.33 1320.2V1308.98H186.45V1320.2ZM186.45 1320.2V1297.76H187.57V1320.2ZM187.57 1320.2V1297.76H188.7V1320.2ZM188.7 1320.2V1308.98H189.82V1320.2ZM189.82 1320.2V1297.76H190.94V1320.2ZM190.94 1320.2V1297.76H192.06V1320.2ZM192.06 1320.2V1308.98H193.18V1320.2ZM193.18 1320.2V1308.98H194.3V1320.2ZM194.3 1320.2V1308.98H195.43V1320.2ZM195.43 1320.2V1297.76H196.55V1320.2ZM196.55 1320.2V1308.98H197.67V1320.2ZM197.67 1320.2V1308.98H198.79V1320.2ZM198.79 1320.2V1297.76H199.91V1320.2ZM199.91 1320.2V1297.76H201.04V1320.2ZM201.04 1320.2V1297.76H202.16V1320.2ZM202.16 1320.2V1308.98H203.28V1320.2ZM203.28 1320.2V1297.76H204.4V1320.2ZM204.4 1320.2V1308.98H205.52V1320.2ZM205.52 1320.2V1308.98H206.65V1320.2ZM206.65 1320.2V1297.76H207.77V1320.2ZM207.77 1320.2V1297.76H208.89V1320.2ZM208.89 1320.2V1308.98H210.01V1320.2ZM210.01 1320.2V1297.76H211.13V1320.2ZM211.13 1320.2V1308.98H212.25V1320.2ZM212.25 1320.2V1297.76H213.38V1320.2ZM213.38 1320.2V1297.76H214.5V1320.2ZM214.5 1320.2V1308.98H215.62V1320.2ZM215.62 1320.2V1297.76H216.74V1320.2ZM216.74 1320.2V1308.98H217.86V1320.2ZM217.86 1320.2V1308.98H218.99V1320.2ZM218.99 1320.2V1297.76H220.11V1320.2ZM220.11 1320.2V1297.76H221.23V1320.2ZM221.23 1320.2V1297.76H222.35V1320.2ZM222.35 1320.2V1297.76H223.47V1320.2ZM223.47 1320.2V1297.76H224.6V1320.2ZM224.6 1320.2V1297.76H225.72V1320.2ZM225.72 1320.2V1297.76H226.84V1320.2ZM226.84 1320.2V1297.76H227.96V1320.2ZM227.96 1320.2V1297.76H229.08V1320.2ZM229.08 1320.2V1308.98H230.2V1320.2ZM230.2 1320.2V1297.76H231.33V1320.2ZM231.33 1320.2V1297.76H232.45V1320.2ZM232.45 1320.2V1297.76H233.57V1320.2ZM233.57 1320.2V1308.98H234.69V1320.2ZM234.69 1320.2V1297.76H235.81V1320.2ZM386.15 1320.2V1308.98H387.27V1320.2ZM387.27 1320.2V1308.98H388.39V1320.2ZM389.51 1320.2V1308.98H390.63V1320.2ZM390.63 1320.2V1308.98H391.75V1320.2ZM392.88 1320.2V1308.98H394V1320.2ZM395.12 1320.2V1308.98H396.24V1320.2ZM396.24 1320.2V1308.98H397.36V1320.2ZM397.36 1320.2V1308.98H398.49V1320.2ZM398.49 1320.2V1308.98H399.61V1320.2ZM399.61 1320.2V1308.98H400.73V1320.2ZM400.73 1320.2V1308.98H401.85V1320.2ZM401.85 1320.2V1308.98H402.97V1320.2ZM402.97 1320.2V1308.98H404.1V1320.2ZM404.1 1320.2V1308.98H405.22V1320.2ZM405.22 1320.2V1308.98H406.34V1320.2ZM406.34 1320.2V1308.98H407.46V1320.2ZM407.46 1320.2V1308.98H408.58V1320.2ZM408.58 1320.2V1308.98H409.7V1320.2ZM409.7 1320.2V1308.98H410.83V1320.2ZM410.83 1320.2V1308.98H411.95V1320.2ZM411.95 1320.2V1308.98H413.07V1320.2ZM413.07 1320.2V1308.98H414.19V1320.2ZM414.19 1320.2V1308.98H415.31V1320.2ZM415.31 1320.2V1308.98H416.44V1320.2ZM416.44 1320.2V1308.98H417.56V1320.2ZM417.56 1320.2V1308.98H418.68V1320.2ZM420.92 1320.2V1308.98H422.05V1320.2ZM422.05 1320.2V1308.98H423.17V1320.2ZM423.17 1320.2V1308.98H424.29V1320.2ZM424.29 1320.2V1308.98H425.41V1320.2ZM425.41 1320.2V1308.98H426.53V1320.2ZM426.53 1320.2V1308.98H427.65V1320.2ZM427.65 1320.2V1308.98H428.78V1320.2ZM428.78 1320.2V1308.98H429.9V1320.2ZM429.9 1320.2V1308.98H431.02V1320.2ZM431.02 1320.2V1308.98H432.14V1320.2ZM432.14 1320.2V1308.98H433.26V1320.2ZM433.26 1320.2V1308.98H434.39V1320.2ZM434.39 1320.2V1308.98H435.51V1320.2ZM435.51 1320.2V1308.98H436.63V1320.2ZM436.63 1320.2V1308.98H437.75V1320.2ZM437.75 1320.2V1308.98H438.87V1320.2ZM438.87 1320.2V1308.98H440V1320.2ZM440 1320.2V1308.98H441.12V1320.2ZM441.12 1320.2V1308.98H442.24V1320.2ZM442.24 1320.2V1308.98H443.36V1320.2ZM443.36 1320.2V1308.98H444.48V1320.2ZM444.48 1320.2V1308.98H445.6V1320.2ZM445.6 1320.2V1308.98H446.73V1320.2ZM446.73 1320.2V1297.76H447.85V1320.2ZM447.85 1320.2V1297.76H448.97V1320.2ZM448.97 1320.2V1308.98H450.09V1320.2ZM450.09 1320.2V1308.98H451.21V1320.2ZM451.21 1320.2V1308.98H452.34V1320.2ZM452.34 1320.2V1308.98H453.46V1320.2ZM453.46 1320.2V1308.98H454.58V1320.2ZM454.58 1320.2V1308.98H455.7V1320.2ZM455.7 1320.2V1308.98H456.82V1320.2ZM456.82 1320.2V1308.98H457.95V1320.2ZM457.95 1320.2V1308.98H459.07V1320.2ZM459.07 1320.2V1308.98H460.19V1320.2ZM460.19 1320.2V1308.98H461.31V1320.2ZM461.31 1320.2V1308.98H462.43V1320.2ZM462.43 1320.2V1308.98H463.55V1320.2ZM463.55 1320.2V1308.98H464.68V1320.2ZM464.68 1320.2V1308.98H465.8V1320.2ZM465.8 1320.2V1308.98H466.92V1320.2ZM466.92 1320.2V1297.76H468.04V1320.2ZM468.04 1320.2V1297.76H469.16V1320.2ZM469.16 1320.2V1308.98H470.29V1320.2ZM470.29 1320.2V1308.98H471.41V1320.2ZM471.41 1320.2V1297.76H472.53V1320.2ZM472.53 1320.2V1308.98H473.65V1320.2ZM473.65 1320.2V1308.98H474.77V1320.2ZM474.77 1320.2V1308.98H475.9V1320.2ZM475.9 1320.2V1297.76H477.02V1320.2ZM477.02 1320.2V1297.76H478.14V1320.2ZM478.14 1320.2V1308.98H479.26V1320.2ZM479.26 1320.2V1308.98H480.38V1320.2ZM480.38 1320.2V1308.98H481.5V1320.2ZM481.5 1320.2V1308.98H482.63V1320.2ZM482.63 1320.2V1308.98H483.75V1320.2ZM483.75 1320.2V1308.98H484.87V1320.2ZM484.87 1320.2V1308.98H485.99V1320.2ZM485.99 1320.2V1308.98H487.11V1320.2ZM487.11 1320.2V1308.98H488.24V1320.2ZM488.24 1320.2V1308.98H489.36V1320.2ZM489.36 1320.2V1308.98H490.48V1320.2ZM490.48 1320.2V1297.76H491.6V1320.2ZM491.6 1320.2V1297.76H492.72V1320.2ZM492.72 1320.2V1308.98H493.85V1320.2ZM493.85 1320.2V1308.98H494.97V1320.2ZM494.97 1320.2V1308.98H496.09V1320.2ZM496.09 1320.2V1308.98H497.21V1320.2ZM497.21 1320.2V1297.76H498.33V1320.2ZM498.33 1320.2V1297.76H499.45V1320.2ZM499.45 1320.2V1308.98H500.58V1320.2ZM500.58 1320.2V1308.98H501.7V1320.2ZM501.7 1320.2V1308.98H502.82V1320.2ZM502.82 1320.2V1308.98H503.94V1320.2ZM503.94 1320.2V1297.76H505.06V1320.2ZM505.06 1320.2V1297.76H506.19V1320.2ZM506.19 1320.2V1308.98H507.31V1320.2ZM507.31 1320.2V1297.76H508.43V1320.2ZM508.43 1320.2V1297.76H509.55V1320.2ZM509.55 1320.2V1297.76H510.67V1320.2ZM510.67 1320.2V1297.76H511.8V1320.2ZM511.8 1320.2V1297.76H512.92V1320.2ZM512.92 1320.2V1297.76H514.04V1320.2ZM514.04 1320.2V1297.76H515.16V1320.2ZM515.16 1320.2V1297.76H516.28V1320.2ZM516.28 1320.2V1297.76H517.4V1320.2ZM517.4 1320.2V1297.76H518.53V1320.2ZM518.53 1320.2V1297.76H519.65V1320.2ZM519.65 1320.2V1297.76H520.77V1320.2ZM520.77 1320.2V1297.76H521.89V1320.2ZM521.89 1320.2V1297.76H523.01V1320.2ZM523.01 1320.2V1297.76H524.14V1320.2ZM524.14 1320.2V1297.76H525.26V1320.2ZM525.26 1320.2V1297.76H526.38V1320.2ZM526.38 1320.2V1297.76H527.5V1320.2ZM527.5 1320.2V1297.76H528.62V1320.2ZM528.62 1320.2V1297.76H529.75V1320.2ZM529.75 1320.2V1297.76H530.87V1320.2ZM530.87 1320.2V1297.76H531.99V1320.2ZM531.99 1320.2V1297.76H533.11V1320.2ZM533.11 1320.2V1297.76H534.23V1320.2ZM534.23 1320.2V1297.76H535.35V1320.2ZM535.35 1320.2V1297.76H536.48V1320.2ZM536.48 1320.2V1297.76H537.6V1320.2ZM537.6 1320.2V1297.76H538.72V1320.2ZM538.72 1320.2V1297.76H539.84V1320.2ZM539.84 1320.2V1297.76H540.96V1320.2ZM540.96 1320.2V1297.76H542.09V1320.2ZM542.09 1320.2V1297.76H543.21V1320.2ZM543.21 1320.2V1297.76H544.33V1320.2ZM544.33 1320.2V1297.76H545.45V1320.2ZM545.45 1320.2V1297.76H546.57V1320.2ZM546.57 1320.2V1297.76H547.7V1320.2ZM547.7 1320.2V1297.76H548.82V1320.2ZM548.82 1320.2V1297.76H549.94V1320.2ZM549.94 1320.2V1297.76H551.06V1320.2ZM551.06 1320.2V1297.76H552.18V1320.2ZM552.18 1320.2V1297.76H553.3V1320.2ZM553.3 1320.2V1297.76H554.43V1320.2ZM554.43 1320.2V1297.76H555.55V1320.2ZM555.55 1320.2V1297.76H556.67V1320.2ZM556.67 1320.2V1297.76H557.79V1320.2ZM557.79 1320.2V1297.76H558.91V1320.2ZM707 1320.2V1264.09H708.12V1320.2ZM708.12 1320.2V1264.09H709.25V1320.2ZM709.25 1320.2V1264.09H710.37V1320.2ZM710.37 1320.2V1286.53H711.49V1320.2ZM714.85 1320.2V1308.98H715.98V1320.2ZM715.98 1320.2V1308.98H717.1V1320.2ZM717.1 1320.2V1308.98H718.22V1320.2ZM718.22 1320.2V1308.98H719.34V1320.2ZM720.46 1320.2V1308.98H721.59V1320.2ZM721.59 1320.2V1308.98H722.71V1320.2ZM723.83 1320.2V1308.98H724.95V1320.2ZM724.95 1320.2V1308.98H726.07V1320.2ZM726.07 1320.2V1308.98H727.2V1320.2ZM728.32 1320.2V1308.98H729.44V1320.2ZM729.44 1320.2V1308.98H730.56V1320.2ZM730.56 1320.2V1308.98H731.68V1320.2ZM731.68 1320.2V1308.98H732.8V1320.2ZM732.8 1320.2V1308.98H733.93V1320.2ZM736.17 1320.2V1308.98H737.29V1320.2ZM737.29 1320.2V1308.98H738.41V1320.2ZM738.41 1320.2V1308.98H739.54V1320.2ZM740.66 1320.2V1308.98H741.78V1320.2ZM741.78 1320.2V1308.98H742.9V1320.2ZM742.9 1320.2V1308.98H744.02V1320.2ZM744.02 1320.2V1308.98H745.15V1320.2ZM745.15 1320.2V1308.98H746.27V1320.2ZM746.27 1320.2V1308.98H747.39V1320.2ZM748.51 1320.2V1308.98H749.63V1320.2ZM749.63 1320.2V1308.98H750.75V1320.2ZM750.75 1320.2V1308.98H751.88V1320.2ZM751.88 1320.2V1308.98H753V1320.2ZM753 1320.2V1308.98H754.12V1320.2ZM754.12 1320.2V1308.98H755.24V1320.2ZM755.24 1320.2V1308.98H756.36V1320.2ZM756.36 1320.2V1308.98H757.49V1320.2ZM757.49 1320.2V1308.98H758.61V1320.2ZM758.61 1320.2V1308.98H759.73V1320.2ZM759.73 1320.2V1308.98H760.85V1320.2ZM760.85 1320.2V1308.98H761.97V1320.2ZM761.97 1320.2V1308.98H763.1V1320.2ZM764.22 1320.2V1308.98H765.34V1320.2ZM765.34 1320.2V1308.98H766.46V1320.2ZM766.46 1320.2V1308.98H767.58V1320.2ZM767.58 1320.2V1308.98H768.7V1320.2ZM768.7 1320.2V1308.98H769.83V1320.2ZM769.83 1320.2V1308.98H770.95V1320.2ZM770.95 1320.2V1308.98H772.07V1320.2ZM772.07 1320.2V1297.76H773.19V1320.2ZM773.19 1320.2V1297.76H774.31V1320.2ZM774.31 1320.2V1297.76H775.44V1320.2ZM775.44 1320.2V1308.98H776.56V1320.2ZM776.56 1320.2V1308.98H777.68V1320.2ZM777.68 1320.2V1308.98H778.8V1320.2ZM778.8 1320.2V1308.98H779.92V1320.2ZM779.92 1320.2V1308.98H781.05V1320.2ZM781.05 1320.2V1297.76H782.17V1320.2ZM782.17 1320.2V1297.76H783.29V1320.2ZM783.29 1320.2V1297.76H784.41V1320.2ZM784.41 1320.2V1297.76H785.53V1320.2ZM785.53 1320.2V1297.76H786.65V1320.2ZM786.65 1320.2V1297.76H787.78V1320.2ZM787.78 1320.2V1297.76H788.9V1320.2ZM788.9 1320.2V1297.76H790.02V1320.2ZM790.02 1320.2V1297.76H791.14V1320.2ZM791.14 1320.2V1297.76H792.26V1320.2ZM792.26 1320.2V1297.76H793.39V1320.2ZM793.39 1320.2V1308.98H794.51V1320.2ZM794.51 1320.2V1297.76H795.63V1320.2ZM795.63 1320.2V1297.76H796.75V1320.2ZM796.75 1320.2V1297.76H797.87V1320.2ZM797.87 1320.2V1297.76H799V1320.2ZM799 1320.2V1297.76H800.12V1320.2ZM800.12 1320.2V1297.76H801.24V1320.2ZM801.24 1320.2V1286.53H802.36V1320.2ZM802.36 1320.2V1286.53H803.48V1320.2ZM803.48 1320.2V1297.76H804.6V1320.2ZM804.6 1320.2V1297.76H805.73V1320.2ZM805.73 1320.2V1297.76H806.85V1320.2ZM806.85 1320.2V1297.76H807.97V1320.2ZM807.97 1320.2V1286.53H809.09V1320.2ZM809.09 1320.2V1286.53H810.21V1320.2ZM810.21 1320.2V1297.76H811.34V1320.2ZM811.34 1320.2V1297.76H812.46V1320.2ZM812.46 1320.2V1286.53H813.58V1320.2ZM813.58 1320.2V1286.53H814.7V1320.2ZM814.7 1320.2V1297.76H815.82V1320.2ZM815.82 1320.2V1297.76H816.95V1320.2ZM816.95 1320.2V1297.76H818.07V1320.2ZM818.07 1320.2V1286.53H819.19V1320.2ZM819.19 1320.2V1286.53H820.31V1320.2ZM820.31 1320.2V1297.76H821.43V1320.2ZM821.43 1320.2V1286.53H822.55V1320.2ZM822.55 1320.2V1286.53H823.68V1320.2ZM823.68 1320.2V1308.98H824.8V1320.2ZM824.8 1320.2V1286.53H825.92V1320.2ZM825.92 1320.2V1286.53H827.04V1320.2ZM827.04 1320.2V1286.53H828.16V1320.2ZM828.16 1320.2V1286.53H829.29V1320.2ZM829.29 1320.2V1286.53H830.41V1320.2ZM830.41 1320.2V1286.53H831.53V1320.2ZM831.53 1320.2V1286.53H832.65V1320.2ZM832.65 1320.2V1286.53H833.77V1320.2ZM833.77 1320.2V1286.53H834.9V1320.2ZM834.9 1320.2V1286.53H836.02V1320.2ZM836.02 1320.2V1286.53H837.14V1320.2ZM837.14 1320.2V1286.53H838.26V1320.2ZM838.26 1320.2V1286.53H839.38V1320.2ZM839.38 1320.2V1286.53H840.5V1320.2ZM840.5 1320.2V1286.53H841.63V1320.2ZM841.63 1320.2V1286.53H842.75V1320.2ZM842.75 1320.2V1286.53H843.87V1320.2ZM843.87 1320.2V1286.53H844.99V1320.2ZM844.99 1320.2V1286.53H846.11V1320.2ZM846.11 1320.2V1286.53H847.24V1320.2ZM847.24 1320.2V1286.53H848.36V1320.2ZM848.36 1320.2V1286.53H849.48V1320.2ZM849.48 1320.2V1286.53H850.6V1320.2ZM850.6 1320.2V1275.31H851.72V1320.2ZM851.72 1320.2V1275.31H852.85V1320.2ZM852.85 1320.2V1286.53H853.97V1320.2ZM853.97 1320.2V1286.53H855.09V1320.2ZM855.09 1320.2V1275.31H856.21V1320.2ZM856.21 1320.2V1275.31H857.33V1320.2ZM857.33 1320.2V1286.53H858.45V1320.2ZM858.45 1320.2V1286.53H859.58V1320.2ZM859.58 1320.2V1286.53H860.7V1320.2ZM860.7 1320.2V1286.53H861.82V1320.2ZM861.82 1320.2V1286.53H862.94V1320.2ZM862.94 1320.2V1275.31H864.06V1320.2ZM864.06 1320.2V1275.31H865.19V1320.2ZM865.19 1320.2V1286.53H866.31V1320.2ZM866.31 1320.2V1286.53H867.43V1320.2ZM867.43 1320.2V1286.53H868.55V1320.2ZM868.55 1320.2V1275.31H869.67V1320.2ZM869.67 1320.2V1275.31H870.8V1320.2ZM870.8 1320.2V1286.53H871.92V1320.2ZM871.92 1320.2V1286.53H873.04V1320.2ZM873.04 1320.2V1275.31H874.16V1320.2ZM874.16 1320.2V1275.31H875.28V1320.2ZM875.28 1320.2V1286.53H876.4V1320.2ZM876.4 1320.2V1275.31H877.53V1320.2ZM877.53 1320.2V1275.31H878.65V1320.2ZM878.65 1320.2V1275.31H879.77V1320.2ZM879.77 1320.2V1275.31H880.89V1320.2ZM880.89 1320.2V1275.31H882.01V1320.2ZM1030.1 1320.2V1252.87H1031.22V1320.2ZM1031.22 1320.2V1252.87H1032.35V1320.2ZM1032.35 1320.2V1252.87H1033.47V1320.2ZM1033.47 1320.2V1252.87H1034.59V1320.2ZM1034.59 1320.2V1252.87H1035.71V1320.2ZM1035.71 1320.2V1252.87H1036.83V1320.2ZM1036.83 1320.2V1252.87H1037.95V1320.2ZM1037.95 1320.2V1252.87H1039.08V1320.2ZM1039.08 1320.2V1252.87H1040.2V1320.2ZM1040.2 1320.2V1252.87H1041.32V1320.2ZM1041.32 1320.2V1252.87H1042.44V1320.2ZM1042.44 1320.2V1264.09H1043.56V1320.2ZM1043.56 1320.2V1308.98H1044.69V1320.2ZM1046.93 1320.2V1308.98H1048.05V1320.2ZM1048.05 1320.2V1308.98H1049.17V1320.2ZM1050.3 1320.2V1308.98H1051.42V1320.2ZM1051.42 1320.2V1308.98H1052.54V1320.2ZM1052.54 1320.2V1308.98H1053.66V1320.2ZM1053.66 1320.2V1308.98H1054.78V1320.2ZM1054.78 1320.2V1308.98H1055.9V1320.2ZM1055.9 1320.2V1308.98H1057.03V1320.2ZM1057.03 1320.2V1308.98H1058.15V1320.2ZM1058.15 1320.2V1308.98H1059.27V1320.2ZM1060.39 1320.2V1308.98H1061.51V1320.2ZM1061.51 1320.2V1308.98H1062.64V1320.2ZM1063.76 1320.2V1308.98H1064.88V1320.2ZM1064.88 1320.2V1308.98H1066V1320.2ZM1066 1320.2V1308.98H1067.12V1320.2ZM1067.12 1320.2V1308.98H1068.25V1320.2ZM1070.49 1320.2V1308.98H1071.61V1320.2ZM1071.61 1320.2V1308.98H1072.73V1320.2ZM1073.85 1320.2V1308.98H1074.98V1320.2ZM1074.98 1320.2V1308.98H1076.1V1320.2ZM1076.1 1320.2V1308.98H1077.22V1320.2ZM1077.22 1320.2V1308.98H1078.34V1320.2ZM1078.34 1320.2V1308.98H1079.46V1320.2ZM1079.46 1320.2V1308.98H1080.59V1320.2ZM1080.59 1320.2V1308.98H1081.71V1320.2ZM1081.71 1320.2V1308.98H1082.83V1320.2ZM1082.83 1320.2V1308.98H1083.95V1320.2ZM1083.95 1320.2V1308.98H1085.07V1320.2ZM1085.07 1320.2V1308.98H1086.2V1320.2ZM1086.2 1320.2V1308.98H1087.32V1320.2ZM1087.32 1320.2V1308.98H1088.44V1320.2ZM1088.44 1320.2V1308.98H1089.56V1320.2ZM1089.56 1320.2V1308.98H1090.68V1320.2ZM1090.68 1320.2V1308.98H1091.8V1320.2ZM1091.8 1320.2V1308.98H1092.93V1320.2ZM1092.93 1320.2V1308.98H1094.05V1320.2ZM1094.05 1320.2V1308.98H1095.17V1320.2ZM1095.17 1320.2V1308.98H1096.29V1320.2ZM1096.29 1320.2V1308.98H1097.41V1320.2ZM1097.41 1320.2V1308.98H1098.54V1320.2ZM1098.54 1320.2V1308.98H1099.66V1320.2ZM1099.66 1320.2V1308.98H1100.78V1320.2ZM1100.78 1320.2V1308.98H1101.9V1320.2ZM1101.9 1320.2V1308.98H1103.02V1320.2ZM1103.02 1320.2V1308.98H1104.15V1320.2ZM1104.15 1320.2V1308.98H1105.27V1320.2ZM1105.27 1320.2V1308.98H1106.39V1320.2ZM1106.39 1320.2V1297.76H1107.51V1320.2ZM1107.51 1320.2V1308.98H1108.63V1320.2ZM1108.63 1320.2V1308.98H1109.75V1320.2ZM1109.75 1320.2V1308.98H1110.88V1320.2ZM1110.88 1320.2V1308.98H1112V1320.2ZM1112 1320.2V1308.98H1113.12V1320.2ZM1113.12 1320.2V1308.98H1114.24V1320.2ZM1114.24 1320.2V1297.76H1115.36V1320.2ZM1115.36 1320.2V1297.76H1116.49V1320.2ZM1116.49 1320.2V1308.98H1117.61V1320.2ZM1117.61 1320.2V1308.98H1118.73V1320.2ZM1118.73 1320.2V1308.98H1119.85V1320.2ZM1119.85 1320.2V1308.98H1120.97V1320.2ZM1120.97 1320.2V1297.76H1122.1V1320.2ZM1122.1 1320.2V1297.76H1123.22V1320.2ZM1123.22 1320.2V1297.76H1124.34V1320.2ZM1124.34 1320.2V1297.76H1125.46V1320.2ZM1125.46 1320.2V1297.76H1126.58V1320.2ZM1126.58 1320.2V1297.76H1127.7V1320.2ZM1127.7 1320.2V1297.76H1128.83V1320.2ZM1128.83 1320.2V1297.76H1129.95V1320.2ZM1129.95 1320.2V1297.76H1131.07V1320.2ZM1131.07 1320.2V1297.76H1132.19V1320.2ZM1132.19 1320.2V1297.76H1133.31V1320.2ZM1133.31 1320.2V1297.76H1134.44V1320.2ZM1134.44 1320.2V1297.76H1135.56V1320.2ZM1135.56 1320.2V1297.76H1136.68V1320.2ZM1136.68 1320.2V1297.76H1137.8V1320.2ZM1137.8 1320.2V1297.76H1138.92V1320.2ZM1138.92 1320.2V1297.76H1140.05V1320.2ZM1140.05 1320.2V1297.76H1141.17V1320.2ZM1141.17 1320.2V1297.76H1142.29V1320.2ZM1142.29 1320.2V1297.76H1143.41V1320.2ZM1143.41 1320.2V1297.76H1144.53V1320.2ZM1144.53 1320.2V1297.76H1145.65V1320.2ZM1145.65 1320.2V1297.76H1146.78V1320.2ZM1146.78 1320.2V1297.76H1147.9V1320.2ZM1147.9 1320.2V1297.76H1149.02V1320.2ZM1149.02 1320.2V1297.76H1150.14V1320.2ZM1150.14 1320.2V1297.76H1151.26V1320.2ZM1151.26 1320.2V1297.76H1152.39V1320.2ZM1152.39 1320.2V1297.76H1153.51V1320.2ZM1153.51 1320.2V1286.53H1154.63V1320.2ZM1154.63 1320.2V1286.53H1155.75V1320.2ZM1155.75 1320.2V1297.76H1156.87V1320.2ZM1156.87 1320.2V1297.76H1158V1320.2ZM1158 1320.2V1297.76H1159.12V1320.2ZM1159.12 1320.2V1297.76H1160.24V1320.2ZM1160.24 1320.2V1297.76H1161.36V1320.2ZM1161.36 1320.2V1297.76H1162.48V1320.2ZM1162.48 1320.2V1286.53H1163.6V1320.2ZM1163.6 1320.2V1286.53H1164.73V1320.2ZM1164.73 1320.2V1286.53H1165.85V1320.2ZM1165.85 1320.2V1297.76H1166.97V1320.2ZM1166.97 1320.2V1297.76H1168.09V1320.2ZM1168.09 1320.2V1297.76H1169.21V1320.2ZM1169.21 1320.2V1286.53H1170.34V1320.2ZM1170.34 1320.2V1286.53H1171.46V1320.2ZM1171.46 1320.2V1286.53H1172.58V1320.2ZM1172.58 1320.2V1286.53H1173.7V1320.2ZM1173.7 1320.2V1297.76H1174.82V1320.2ZM1174.82 1320.2V1297.76H1175.95V1320.2ZM1175.95 1320.2V1286.53H1177.07V1320.2ZM1177.07 1320.2V1286.53H1178.19V1320.2ZM1178.19 1320.2V1286.53H1179.31V1320.2ZM1179.31 1320.2V1286.53H1180.43V1320.2ZM1180.43 1320.2V1286.53H1181.55V1320.2ZM1181.55 1320.2V1286.53H1182.68V1320.2ZM1182.68 1320.2V1286.53H1183.8V1320.2ZM1183.8 1320.2V1286.53H1184.92V1320.2ZM1184.92 1320.2V1286.53H1186.04V1320.2ZM1186.04 1320.2V1286.53H1187.16V1320.2ZM1187.16 1320.2V1286.53H1188.29V1320.2ZM1188.29 1320.2V1286.53H1189.41V1320.2ZM1189.41 1320.2V1286.53H1190.53V1320.2ZM1190.53 1320.2V1286.53H1191.65V1320.2ZM1191.65 1320.2V1286.53H1192.77V1320.2ZM1192.77 1320.2V1286.53H1193.9V1320.2ZM1193.9 1320.2V1286.53H1195.02V1320.2ZM1195.02 1320.2V1286.53H1196.14V1320.2ZM1196.14 1320.2V1286.53H1197.26V1320.2ZM1197.26 1320.2V1286.53H1198.38V1320.2ZM1198.38 1320.2V1286.53H1199.5V1320.2ZM1199.5 1320.2V1286.53H1200.63V1320.2ZM1200.63 1320.2V1286.53H1201.75V1320.2ZM1201.75 1320.2V1286.53H1202.87V1320.2ZM1202.87 1320.2V1286.53H1203.99V1320.2ZM1203.99 1320.2V1286.53H1205.11V1320.2ZM1353.2 1320.2V1252.87H1354.32V1320.2ZM1354.32 1320.2V1252.87H1355.45V1320.2ZM1355.45 1320.2V1252.87H1356.57V1320.2ZM1356.57 1320.2V1252.87H1357.69V1320.2ZM1357.69 1320.2V1252.87H1358.81V1320.2ZM1358.81 1320.2V1252.87H1359.93V1320.2ZM1359.93 1320.2V1252.87H1361.05V1320.2ZM1361.05 1320.2V1252.87H1362.18V1320.2ZM1362.18 1320.2V1252.87H1363.3V1320.2ZM1363.3 1320.2V1308.98H1364.42V1320.2ZM1364.42 1320.2V1308.98H1365.54V1320.2ZM1365.54 1320.2V1308.98H1366.66V1320.2ZM1366.66 1320.2V1308.98H1367.79V1320.2ZM1368.91 1320.2V1308.98H1370.03V1320.2ZM1370.03 1320.2V1308.98H1371.15V1320.2ZM1371.15 1320.2V1308.98H1372.27V1320.2ZM1372.27 1320.2V1308.98H1373.4V1320.2ZM1373.4 1320.2V1308.98H1374.52V1320.2ZM1374.52 1320.2V1308.98H1375.64V1320.2ZM1375.64 1320.2V1308.98H1376.76V1320.2ZM1376.76 1320.2V1308.98H1377.88V1320.2ZM1377.88 1320.2V1308.98H1379V1320.2ZM1379 1320.2V1308.98H1380.13V1320.2ZM1381.25 1320.2V1308.98H1382.37V1320.2ZM1384.61 1320.2V1308.98H1385.74V1320.2ZM1386.86 1320.2V1308.98H1387.98V1320.2ZM1387.98 1320.2V1308.98H1389.1V1320.2ZM1389.1 1320.2V1308.98H1390.22V1320.2ZM1390.22 1320.2V1308.98H1391.35V1320.2ZM1391.35 1320.2V1308.98H1392.47V1320.2ZM1392.47 1320.2V1308.98H1393.59V1320.2ZM1393.59 1320.2V1308.98H1394.71V1320.2ZM1394.71 1320.2V1308.98H1395.83V1320.2ZM1395.83 1320.2V1308.98H1396.95V1320.2ZM1396.95 1320.2V1308.98H1398.08V1320.2ZM1398.08 1320.2V1308.98H1399.2V1320.2ZM1399.2 1320.2V1308.98H1400.32V1320.2ZM1400.32 1320.2V1308.98H1401.44V1320.2ZM1401.44 1320.2V1308.98H1402.56V1320.2ZM1402.56 1320.2V1308.98H1403.69V1320.2ZM1403.69 1320.2V1308.98H1404.81V1320.2ZM1404.81 1320.2V1308.98H1405.93V1320.2ZM1405.93 1320.2V1308.98H1407.05V1320.2ZM1407.05 1320.2V1308.98H1408.17V1320.2ZM1408.17 1320.2V1308.98H1409.3V1320.2ZM1409.3 1320.2V1308.98H1410.42V1320.2ZM1410.42 1320.2V1308.98H1411.54V1320.2ZM1411.54 1320.2V1308.98H1412.66V1320.2ZM1412.66 1320.2V1308.98H1413.78V1320.2ZM1413.78 1320.2V1308.98H1414.9V1320.2ZM1414.9 1320.2V1308.98H1416.03V1320.2ZM1416.03 1320.2V1308.98H1417.15V1320.2ZM1417.15 1320.2V1308.98H1418.27V1320.2ZM1418.27 1320.2V1308.98H1419.39V1320.2ZM1419.39 1320.2V1308.98H1420.51V1320.2ZM1420.51 1320.2V1308.98H1421.64V1320.2ZM1421.64 1320.2V1308.98H1422.76V1320.2ZM1422.76 1320.2V1308.98H1423.88V1320.2ZM1423.88 1320.2V1308.98H1425V1320.2ZM1425 1320.2V1308.98H1426.12V1320.2ZM1426.12 1320.2V1308.98H1427.25V1320.2ZM1427.25 1320.2V1308.98H1428.37V1320.2ZM1428.37 1320.2V1308.98H1429.49V1320.2ZM1429.49 1320.2V1308.98H1430.61V1320.2ZM1430.61 1320.2V1308.98H1431.73V1320.2ZM1431.73 1320.2V1308.98H1432.85V1320.2ZM1432.85 1320.2V1308.98H1433.98V1320.2ZM1433.98 1320.2V1308.98H1435.1V1320.2ZM1435.1 1320.2V1308.98H1436.22V1320.2ZM1436.22 1320.2V1308.98H1437.34V1320.2ZM1437.34 1320.2V1308.98H1438.46V1320.2ZM1438.46 1320.2V1308.98H1439.59V1320.2ZM1439.59 1320.2V1308.98H1440.71V1320.2ZM1440.71 1320.2V1308.98H1441.83V1320.2ZM1441.83 1320.2V1308.98H1442.95V1320.2ZM1442.95 1320.2V1308.98H1444.07V1320.2ZM1444.07 1320.2V1308.98H1445.2V1320.2ZM1445.2 1320.2V1308.98H1446.32V1320.2ZM1446.32 1320.2V1308.98H1447.44V1320.2ZM1447.44 1320.2V1308.98H1448.56V1320.2ZM1448.56 1320.2V1308.98H1449.68V1320.2ZM1449.68 1320.2V1308.98H1450.8V1320.2ZM1450.8 1320.2V1308.98H1451.93V1320.2ZM1451.93 1320.2V1308.98H1453.05V1320.2ZM1453.05 1320.2V1308.98H1454.17V1320.2ZM1454.17 1320.2V1308.98H1455.29V1320.2ZM1455.29 1320.2V1308.98H1456.41V1320.2ZM1456.41 1320.2V1308.98H1457.54V1320.2ZM1457.54 1320.2V1308.98H1458.66V1320.2ZM1458.66 1320.2V1308.98H1459.78V1320.2ZM1459.78 1320.2V1308.98H1460.9V1320.2ZM1460.9 1320.2V1308.98H1462.02V1320.2ZM1462.02 1320.2V1297.76H1463.15V1320.2ZM1463.15 1320.2V1308.98H1464.27V1320.2ZM1464.27 1320.2V1308.98H1465.39V1320.2ZM1465.39 1320.2V1308.98H1466.51V1320.2ZM1466.51 1320.2V1308.98H1467.63V1320.2ZM1467.63 1320.2V1308.98H1468.75V1320.2ZM1468.75 1320.2V1308.98H1469.88V1320.2ZM1469.88 1320.2V1308.98H1471V1320.2ZM1471 1320.2V1308.98H1472.12V1320.2ZM1472.12 1320.2V1308.98H1473.24V1320.2ZM1473.24 1320.2V1308.98H1474.36V1320.2ZM1474.36 1320.2V1308.98H1475.49V1320.2ZM1475.49 1320.2V1308.98H1476.61V1320.2ZM1476.61 1320.2V1308.98H1477.73V1320.2ZM1477.73 1320.2V1308.98H1478.85V1320.2ZM1478.85 1320.2V1308.98H1479.97V1320.2ZM1479.97 1320.2V1308.98H1481.1V1320.2ZM1481.1 1320.2V1308.98H1482.22V1320.2ZM1482.22 1320.2V1308.98H1483.34V1320.2ZM1483.34 1320.2V1308.98H1484.46V1320.2ZM1484.46 1320.2V1308.98H1485.58V1320.2ZM1485.58 1320.2V1308.98H1486.7V1320.2ZM1486.7 1320.2V1308.98H1487.83V1320.2ZM1487.83 1320.2V1308.98H1488.95V1320.2ZM1488.95 1320.2V1308.98H1490.07V1320.2ZM1490.07 1320.2V1308.98H1491.19V1320.2ZM1491.19 1320.2V1308.98H1492.31V1320.2ZM1492.31 1320.2V1308.98H1493.44V1320.2ZM1493.44 1320.2V1308.98H1494.56V1320.2ZM1494.56 1320.2V1308.98H1495.68V1320.2ZM1495.68 1320.2V1308.98H1496.8V1320.2ZM1496.8 1320.2V1308.98H1497.92V1320.2ZM1497.92 1320.2V1308.98H1499.05V1320.2ZM1499.05 1320.2V1297.76H1500.17V1320.2ZM1500.17 1320.2V1297.76H1501.29V1320.2ZM1501.29 1320.2V1297.76H1502.41V1320.2ZM1502.41 1320.2V1297.76H1503.53V1320.2ZM1503.53 1320.2V1308.98H1504.65V1320.2ZM1504.65 1320.2V1308.98H1505.78V1320.2ZM1505.78 1320.2V1308.98H1506.9V1320.2ZM1506.9 1320.2V1308.98H1508.02V1320.2ZM1508.02 1320.2V1308.98H1509.14V1320.2ZM1509.14 1320.2V1297.76H1510.26V1320.2ZM1510.26 1320.2V1297.76H1511.39V1320.2ZM1511.39 1320.2V1297.76H1512.51V1320.2ZM1512.51 1320.2V1308.98H1513.63V1320.2ZM1513.63 1320.2V1308.98H1514.75V1320.2ZM1514.75 1320.2V1308.98H1515.87V1320.2ZM1515.87 1320.2V1308.98H1517V1320.2ZM1517 1320.2V1308.98H1518.12V1320.2ZM1518.12 1320.2V1308.98H1519.24V1320.2ZM1519.24 1320.2V1308.98H1520.36V1320.2ZM1520.36 1320.2V1297.76H1521.48V1320.2ZM1521.48 1320.2V1297.76H1522.6V1320.2ZM1522.6 1320.2V1308.98H1523.73V1320.2ZM1523.73 1320.2V1297.76H1524.85V1320.2ZM1524.85 1320.2V1297.76H1525.97V1320.2ZM1525.97 1320.2V1297.76H1527.09V1320.2ZM1527.09 1320.2V1308.98H1528.21V1320.2ZM1676.3 1320.2V1252.87H1677.42V1320.2ZM1677.42 1320.2V1252.87H1678.55V1320.2ZM1678.55 1320.2V1252.87H1679.67V1320.2ZM1679.67 1320.2V1252.87H1680.79V1320.2ZM1680.79 1320.2V1252.87H1681.91V1320.2ZM1681.91 1320.2V1308.98H1683.03V1320.2ZM1683.03 1320.2V1308.98H1684.15V1320.2ZM1684.15 1320.2V1308.98H1685.28V1320.2ZM1685.28 1320.2V1308.98H1686.4V1320.2ZM1686.4 1320.2V1308.98H1687.52V1320.2ZM1689.76 1320.2V1308.98H1690.89V1320.2ZM1692.01 1320.2V1308.98H1693.13V1320.2ZM1694.25 1320.2V1308.98H1695.37V1320.2ZM1695.37 1320.2V1308.98H1696.5V1320.2ZM1696.5 1320.2V1308.98H1697.62V1320.2ZM1698.74 1320.2V1308.98H1699.86V1320.2ZM1699.86 1320.2V1308.98H1700.98V1320.2ZM1702.1 1320.2V1308.98H1703.23V1320.2ZM1703.23 1320.2V1308.98H1704.35V1320.2ZM1704.35 1320.2V1308.98H1705.47V1320.2ZM1705.47 1320.2V1308.98H1706.59V1320.2ZM1706.59 1320.2V1308.98H1707.71V1320.2ZM1707.71 1320.2V1308.98H1708.84V1320.2ZM1708.84 1320.2V1308.98H1709.96V1320.2ZM1709.96 1320.2V1308.98H1711.08V1320.2ZM1712.2 1320.2V1308.98H1713.32V1320.2ZM1713.32 1320.2V1308.98H1714.45V1320.2ZM1714.45 1320.2V1308.98H1715.57V1320.2ZM1715.57 1320.2V1308.98H1716.69V1320.2ZM1716.69 1320.2V1308.98H1717.81V1320.2ZM1717.81 1320.2V1308.98H1718.93V1320.2ZM1718.93 1320.2V1308.98H1720.05V1320.2ZM1720.05 1320.2V1308.98H1721.18V1320.2ZM1721.18 1320.2V1308.98H1722.3V1320.2ZM1722.3 1320.2V1308.98H1723.42V1320.2ZM1723.42 1320.2V1308.98H1724.54V1320.2ZM1724.54 1320.2V1308.98H1725.66V1320.2ZM1725.66 1320.2V1308.98H1726.79V1320.2ZM1726.79 1320.2V1308.98H1727.91V1320.2ZM1727.91 1320.2V1308.98H1729.03V1320.2ZM1729.03 1320.2V1308.98H1730.15V1320.2ZM1730.15 1320.2V1308.98H1731.27V1320.2ZM1731.27 1320.2V1308.98H1732.4V1320.2ZM1732.4 1320.2V1308.98H1733.52V1320.2ZM1733.52 1320.2V1308.98H1734.64V1320.2ZM1734.64 1320.2V1308.98H1735.76V1320.2ZM1735.76 1320.2V1308.98H1736.88V1320.2ZM1736.88 1320.2V1308.98H1738V1320.2ZM1738 1320.2V1308.98H1739.13V1320.2ZM1739.13 1320.2V1308.98H1740.25V1320.2ZM1740.25 1320.2V1308.98H1741.37V1320.2ZM1741.37 1320.2V1308.98H1742.49V1320.2ZM1742.49 1320.2V1308.98H1743.61V1320.2ZM1743.61 1320.2V1308.98H1744.74V1320.2ZM1744.74 1320.2V1308.98H1745.86V1320.2ZM1745.86 1320.2V1308.98H1746.98V1320.2ZM1746.98 1320.2V1308.98H1748.1V1320.2ZM1748.1 1320.2V1308.98H1749.22V1320.2ZM1749.22 1320.2V1308.98H1750.35V1320.2ZM1750.35 1320.2V1308.98H1751.47V1320.2ZM1751.47 1320.2V1308.98H1752.59V1320.2ZM1752.59 1320.2V1308.98H1753.71V1320.2ZM1753.71 1320.2V1297.76H1754.83V1320.2ZM1754.83 1320.2V1297.76H1755.95V1320.2ZM1755.95 1320.2V1308.98H1757.08V1320.2ZM1757.08 1320.2V1308.98H1758.2V1320.2ZM1758.2 1320.2V1308.98H1759.32V1320.2ZM1759.32 1320.2V1308.98H1760.44V1320.2ZM1760.44 1320.2V1308.98H1761.56V1320.2ZM1761.56 1320.2V1308.98H1762.69V1320.2ZM1762.69 1320.2V1308.98H1763.81V1320.2ZM1763.81 1320.2V1308.98H1764.93V1320.2ZM1764.93 1320.2V1308.98H1766.05V1320.2ZM1766.05 1320.2V1308.98H1767.17V1320.2ZM1767.17 1320.2V1308.98H1768.3V1320.2ZM1768.3 1320.2V1308.98H1769.42V1320.2ZM1769.42 1320.2V1308.98H1770.54V1320.2ZM1770.54 1320.2V1308.98H1771.66V1320.2ZM1771.66 1320.2V1308.98H1772.78V1320.2ZM1772.78 1320.2V1308.98H1773.9V1320.2ZM1773.9 1320.2V1308.98H1775.03V1320.2ZM1775.03 1320.2V1308.98H1776.15V1320.2ZM1776.15 1320.2V1308.98H1777.27V1320.2ZM1777.27 1320.2V1308.98H1778.39V1320.2ZM1778.39 1320.2V1308.98H1779.51V1320.2ZM1779.51 1320.2V1308.98H1780.64V1320.2ZM1780.64 1320.2V1308.98H1781.76V1320.2ZM1781.76 1320.2V1308.98H1782.88V1320.2ZM1782.88 1320.2V1308.98H1784V1320.2ZM1784 1320.2V1308.98H1785.12V1320.2ZM1785.12 1320.2V1308.98H1786.25V1320.2ZM1786.25 1320.2V1297.76H1787.37V1320.2ZM1787.37 1320.2V1297.76H1788.49V1320.2ZM1788.49 1320.2V1308.98H1789.61V1320.2ZM1789.61 1320.2V1297.76H1790.73V1320.2ZM1790.73 1320.2V1297.76H1791.85V1320.2ZM1791.85 1320.2V1308.98H1792.98V1320.2ZM1792.98 1320.2V1297.76H1794.1V1320.2ZM1794.1 1320.2V1297.76H1795.22V1320.2ZM1795.22 1320.2V1308.98H1796.34V1320.2ZM1796.34 1320.2V1308.98H1797.46V1320.2ZM1797.46 1320.2V1308.98H1798.59V1320.2ZM1798.59 1320.2V1308.98H1799.71V1320.2ZM1799.71 1320.2V1308.98H1800.83V1320.2ZM1800.83 1320.2V1308.98H1801.95V1320.2ZM1801.95 1320.2V1308.98H1803.07V1320.2ZM1803.07 1320.2V1308.98H1804.2V1320.2ZM1804.2 1320.2V1297.76H1805.32V1320.2ZM1805.32 1320.2V1297.76H1806.44V1320.2ZM1806.44 1320.2V1308.98H1807.56V1320.2ZM1807.56 1320.2V1308.98H1808.68V1320.2ZM1808.68 1320.2V1308.98H1809.8V1320.2ZM1809.8 1320.2V1297.76H1810.93V1320.2ZM1810.93 1320.2V1308.98H1812.05V1320.2ZM1812.05 1320.2V1297.76H1813.17V1320.2ZM1813.17 1320.2V1297.76H1814.29V1320.2ZM1814.29 1320.2V1308.98H1815.41V1320.2ZM1815.41 1320.2V1297.76H1816.54V1320.2ZM1816.54 1320.2V1297.76H1817.66V1320.2ZM1817.66 1320.2V1308.98H1818.78V1320.2ZM1818.78 1320.2V1297.76H1819.9V1320.2ZM1819.9 1320.2V1297.76H1821.02V1320.2ZM1821.02 1320.2V1297.76H1822.15V1320.2ZM1822.15 1320.2V1308.98H1823.27V1320.2ZM1823.27 1320.2V1297.76H1824.39V1320.2ZM1824.39 1320.2V1297.76H1825.51V1320.2ZM1825.51 1320.2V1297.76H1826.63V1320.2ZM1826.63 1320.2V1308.98H1827.75V1320.2ZM1827.75 1320.2V1308.98H1828.88V1320.2ZM1828.88 1320.2V1308.98H1830V1320.2ZM1830 1320.2V1297.76H1831.12V1320.2ZM1831.12 1320.2V1308.98H1832.24V1320.2ZM1832.24 1320.2V1308.98H1833.36V1320.2ZM1833.36 1320.2V1297.76H1834.49V1320.2ZM1834.49 1320.2V1297.76H1835.61V1320.2ZM1835.61 1320.2V1297.76H1836.73V1320.2ZM1836.73 1320.2V1308.98H1837.85V1320.2ZM1837.85 1320.2V1308.98H1838.97V1320.2ZM1838.97 1320.2V1297.76H1840.1V1320.2ZM1840.1 1320.2V1297.76H1841.22V1320.2ZM1841.22 1320.2V1297.76H1842.34V1320.2ZM1842.34 1320.2V1308.98H1843.46V1320.2ZM1843.46 1320.2V1308.98H1844.58V1320.2ZM1844.58 1320.2V1297.76H1845.7V1320.2ZM1845.7 1320.2V1297.76H1846.83V1320.2ZM1846.83 1320.2V1308.98H1847.95V1320.2ZM1847.95 1320.2V1297.76H1849.07V1320.2ZM1849.07 1320.2V1297.76H1850.19V1320.2ZM1850.19 1320.2V1297.76H1851.31V1320.2ZM1851.31 1320.2V1308.98H1852.44V1320.2ZM1852.44 1320.2V1297.76H1853.56V1320.2ZM1853.56 1320.2V1308.98H1854.68V1320.2ZM1854.68 1320.2V1297.76H1855.8V1320.2ZM1855.8 1320.2V1297.76H1856.92V1320.2ZM1856.92 1320.2V1297.76H1858.05V1320.2ZM1858.05 1320.2V1297.76H1859.17V1320.2ZM1859.17 1320.2V1297.76H1860.29V1320.2ZM1860.29 1320.2V1308.98H1861.41V1320.2ZM1861.41 1320.2V1308.98H1862.53V1320.2ZM1862.53 1320.2V1297.76H1863.65V1320.2ZM1863.65 1320.2V1308.98H1864.78V1320.2ZM1864.78 1320.2V1308.98H1865.9V1320.2ZM1865.9 1320.2V1308.98H1867.02V1320.2ZM1867.02 1320.2V1308.98H1868.14V1320.2ZM1868.14 1320.2V1308.98H1869.26V1320.2ZM1869.26 1320.2V1308.98H1870.39V1320.2ZM1870.39 1320.2V1308.98H1871.51V1320.2ZM1871.51 1320.2V1308.98H1872.63V1320.2ZM1872.63 1320.2V1308.98H1873.75V1320.2ZM1873.75 1320.2V1308.98H1874.87V1320.2ZM1874.87 1320.2V1297.76H1876V1320.2ZM1876 1320.2V1308.98H1877.12V1320.2ZM1877.12 1320.2V1297.76H1878.24V1320.2ZM1878.24 1320.2V1308.98H1879.36V1320.2ZM1879.36 1320.2V1308.98H1880.48V1320.2ZM1880.48 1320.2V1308.98H1881.6V1320.2ZM1881.6 1320.2V1308.98H1882.73V1320.2ZM1882.73 1320.2V1308.98H1883.85V1320.2ZM1883.85 1320.2V1308.98H1884.97V1320.2ZM1884.97 1320.2V1308.98H1886.09V1320.2ZM1886.09 1320.2V1308.98H1887.21V1320.2ZM1887.21 1320.2V1308.98H1888.34V1320.2ZM1888.34 1320.2V1297.76H1889.46V1320.2ZM1889.46 1320.2V1297.76H1890.58V1320.2ZM1890.58 1320.2V1308.98H1891.7V1320.2ZM1891.7 1320.2V1308.98H1892.82V1320.2ZM1893.95 1320.2V1308.98H1895.07V1320.2ZM1896.19 1320.2V1308.98H1897.31V1320.2ZM1897.31 1320.2V1308.98H1898.43V1320.2ZM1898.43 1320.2V1308.98H1899.55V1320.2ZM1899.55 1320.2V1308.98H1900.68V1320.2ZM1900.68 1320.2V1308.98H1901.8V1320.2ZM1902.92 1320.2V1308.98H1904.04V1320.2ZM1904.04 1320.2V1308.98H1905.16V1320.2ZM1905.16 1320.2V1308.98H1906.29V1320.2ZM1906.29 1320.2V1308.98H1907.41V1320.2ZM1907.41 1320.2V1308.98H1908.53V1320.2ZM1908.53 1320.2V1308.98H1909.65V1320.2ZM1909.65 1320.2V1308.98H1910.77V1320.2ZM1910.77 1320.2V1308.98H1911.9V1320.2ZM1911.9 1320.2V1308.98H1913.02V1320.2ZM1913.02 1320.2V1308.98H1914.14V1320.2ZM1914.14 1320.2V1308.98H1915.26V1320.2ZM1915.26 1320.2V1308.98H1916.38V1320.2ZM1916.38 1320.2V1308.98H1917.5V1320.2ZM1917.5 1320.2V1308.98H1918.63V1320.2ZM1919.75 1320.2V1308.98H1920.87V1320.2ZM1921.99 1320.2V1308.98H1923.11V1320.2ZM1923.11 1320.2V1308.98H1924.24V1320.2ZM1924.24 1320.2V1308.98H1925.36V1320.2ZM1926.48 1320.2V1308.98H1927.6V1320.2ZM1927.6 1320.2V1308.98H1928.72V1320.2ZM1928.72 1320.2V1308.98H1929.85V1320.2ZM1929.85 1320.2V1308.98H1930.97V1320.2ZM1930.97 1320.2V1308.98H1932.09V1320.2ZM1932.09 1320.2V1308.98H1933.21V1320.2ZM1933.21 1320.2V1308.98H1934.33V1320.2ZM1934.33 1320.2V1308.98H1935.45V1320.2ZM1935.45 1320.2V1308.98H1936.58V1320.2ZM1936.58 1320.2V1308.98H1937.7V1320.2ZM1937.7 1320.2V1308.98H1938.82V1320.2ZM1938.82 1320.2V1308.98H1939.94V1320.2ZM1939.94 1320.2V1308.98H1941.06V1320.2ZM1941.06 1320.2V1308.98H1942.19V1320.2ZM1942.19 1320.2V1308.98H1943.31V1320.2ZM1943.31 1320.2V1308.98H1944.43V1320.2ZM1944.43 1320.2V1308.98H1945.55V1320.2ZM1946.67 1320.2V1308.98H1947.8V1320.2ZM1947.8 1320.2V1308.98H1948.92V1320.2ZM1948.92 1320.2V1308.98H1950.04V1320.2ZM1950.04 1320.2V1308.98H1951.16V1320.2ZM1951.16 1320.2V1308.98H1952.28V1320.2ZM1953.4 1320.2V1308.98H1954.53V1320.2ZM1955.65 1320.2V1308.98H1956.77V1320.2ZM1959.01 1320.2V1308.98H1960.14V1320.2ZM1960.14 1320.2V1308.98H1961.26V1320.2ZM1961.26 1320.2V1308.98H1962.38V1320.2ZM1962.38 1320.2V1308.98H1963.5V1320.2ZM1963.5 1320.2V1308.98H1964.62V1320.2ZM1964.62 1320.2V1308.98H1965.75V1320.2ZM1965.75 1320.2V1308.98H1966.87V1320.2ZM1966.87 1320.2V1308.98H1967.99V1320.2ZM1967.99 1320.2V1308.98H1969.11V1320.2ZM1969.11 1320.2V1308.98H1970.23V1320.2ZM1970.23 1320.2V1308.98H1971.35V1320.2ZM1971.35 1320.2V1308.98H1972.48V1320.2ZM1972.48 1320.2V1308.98H1973.6V1320.2ZM1973.6 1320.2V1308.98H1974.72V1320.2ZM1975.84 1320.2V1308.98H1976.96V1320.2ZM1976.96 1320.2V1308.98H1978.09V1320.2ZM1978.09 1320.2V1308.98H1979.21V1320.2ZM1979.21 1320.2V1308.98H1980.33V1320.2ZM1980.33 1320.2V1308.98H1981.45V1320.2ZM1981.45 1320.2V1308.98H1982.57V1320.2ZM1982.57 1320.2V1308.98H1983.7V1320.2ZM1983.7 1320.2V1308.98H1984.82V1320.2ZM1984.82 1320.2V1308.98H1985.94V1320.2ZM1985.94 1320.2V1308.98H1987.06V1320.2ZM1987.06 1320.2V1308.98H1988.18V1320.2ZM1988.18 1320.2V1308.98H1989.3V1320.2ZM1989.3 1320.2V1308.98H1990.43V1320.2ZM1990.43 1320.2V1308.98H1991.55V1320.2ZM1991.55 1320.2V1308.98H1992.67V1320.2ZM1992.67 1320.2V1308.98H1993.79V1320.2ZM1994.91 1320.2V1308.98H1996.04V1320.2ZM1996.04 1320.2V1308.98H1997.16V1320.2ZM1998.28 1320.2V1308.98H1999.4V1320.2ZM1999.4 1320.2V1308.98H2000.52V1320.2ZM2000.52 1320.2V1308.98H2001.65V1320.2ZM2001.65 1320.2V1308.98H2002.77V1320.2ZM2002.77 1320.2V1308.98H2003.89V1320.2ZM2003.89 1320.2V1308.98H2005.01V1320.2ZM2006.13 1320.2V1308.98H2007.25V1320.2ZM2007.25 1320.2V1308.98H2008.38V1320.2ZM2008.38 1320.2V1308.98H2009.5V1320.2ZM2009.5 1320.2V1308.98H2010.62V1320.2ZM2010.62 1320.2V1308.98H2011.74V1320.2ZM2012.86 1320.2V1308.98H2013.99V1320.2ZM2013.99 1320.2V1308.98H2015.11V1320.2ZM2016.23 1320.2V1308.98H2017.35V1320.2ZM2017.35 1320.2V1308.98H2018.47V1320.2ZM2018.47 1320.2V1308.98H2019.6V1320.2ZM2019.6 1320.2V1308.98H2020.72V1320.2ZM2020.72 1320.2V1308.98H2021.84V1320.2ZM2021.84 1320.2V1308.98H2022.96V1320.2ZM2022.96 1320.2V1308.98H2024.08V1320.2ZM2024.08 1320.2V1308.98H2025.2V1320.2ZM2025.2 1320.2V1308.98H2026.33V1320.2ZM2026.33 1320.2V1308.98H2027.45V1320.2ZM2027.45 1320.2V1308.98H2028.57V1320.2ZM2028.57 1320.2V1308.98H2029.69V1320.2ZM2030.81 1320.2V1308.98H2031.94V1320.2ZM2031.94 1320.2V1308.98H2033.06V1320.2ZM2033.06 1320.2V1308.98H2034.18V1320.2ZM2034.18 1320.2V1308.98H2035.3V1320.2ZM2035.3 1320.2V1308.98H2036.42V1320.2ZM2038.67 1320.2V1308.98H2039.79V1320.2ZM2039.79 1320.2V1308.98H2040.91V1320.2ZM2040.91 1320.2V1308.98H2042.03V1320.2ZM2042.03 1320.2V1308.98H2043.15V1320.2ZM2043.15 1320.2V1308.98H2044.28V1320.2ZM2044.28 1320.2V1308.98H2045.4V1320.2ZM2045.4 1320.2V1308.98H2046.52V1320.2ZM2046.52 1320.2V1308.98H2047.64V1320.2ZM2048.76 1320.2V1308.98H2049.89V1320.2ZM2049.89 1320.2V1308.98H2051.01V1320.2ZM2051.01 1320.2V1308.98H2052.13V1320.2ZM2052.13 1320.2V1308.98H2053.25V1320.2ZM2054.37 1320.2V1308.98H2055.5V1320.2ZM2055.5 1320.2V1308.98H2056.62V1320.2ZM2056.62 1320.2V1308.98H2057.74V1320.2ZM2057.74 1320.2V1308.98H2058.86V1320.2ZM2058.86 1320.2V1308.98H2059.98V1320.2ZM2059.98 1320.2V1308.98H2061.1V1320.2ZM2061.1 1320.2V1308.98H2062.23V1320.2ZM2062.23 1320.2V1308.98H2063.35V1320.2ZM2063.35 1320.2V1308.98H2064.47V1320.2ZM2064.47 1320.2V1308.98H2065.59V1320.2ZM2065.59 1320.2V1308.98H2066.71V1320.2ZM2066.71 1320.2V1308.98H2067.84V1320.2ZM2067.84 1320.2V1308.98H2068.96V1320.2ZM2068.96 1320.2V1308.98H2070.08V1320.2ZM2070.08 1320.2V1308.98H2071.2V1320.2ZM2071.2 1320.2V1308.98H2072.32V1320.2ZM2072.32 1320.2V1308.98H2073.45V1320.2ZM2073.45 1320.2V1308.98H2074.57V1320.2ZM2074.57 1320.2V1308.98H2075.69V1320.2ZM2075.69 1320.2V1308.98H2076.81V1320.2ZM2079.05 1320.2V1308.98H2080.18V1320.2ZM2080.18 1320.2V1308.98H2081.3V1320.2ZM2081.3 1320.2V1308.98H2082.42V1320.2ZM2082.42 1320.2V1308.98H2083.54V1320.2ZM2083.54 1320.2V1308.98H2084.66V1320.2ZM2084.66 1320.2V1308.98H2085.79V1320.2ZM2085.79 1320.2V1308.98H2086.91V1320.2ZM2088.03 1320.2V1308.98H2089.15V1320.2ZM2089.15 1320.2V1308.98H2090.27V1320.2ZM2090.27 1320.2V1308.98H2091.4V1320.2ZM2091.4 1320.2V1308.98H2092.52V1320.2ZM2092.52 1320.2V1308.98H2093.64V1320.2ZM2093.64 1320.2V1308.98H2094.76V1320.2ZM2094.76 1320.2V1308.98H2095.88V1320.2ZM2095.88 1320.2V1308.98H2097V1320.2ZM2097 1320.2V1297.76H2098.13V1320.2ZM2098.13 1320.2V1297.76H2099.25V1320.2ZM2099.25 1320.2V1308.98H2100.37V1320.2ZM2100.37 1320.2V1308.98H2101.49V1320.2ZM2101.49 1320.2V1308.98H2102.61V1320.2ZM2102.61 1320.2V1308.98H2103.74V1320.2ZM2105.98 1320.2V1308.98H2107.1V1320.2ZM2107.1 1320.2V1308.98H2108.22V1320.2ZM2108.22 1320.2V1308.98H2109.35V1320.2ZM2109.35 1320.2V1308.98H2110.47V1320.2ZM2110.47 1320.2V1308.98H2111.59V1320.2ZM2111.59 1320.2V1308.98H2112.71V1320.2ZM2112.71 1320.2V1308.98H2113.83V1320.2ZM2113.83 1320.2V1297.76H2114.95V1320.2ZM2114.95 1320.2V1308.98H2116.08V1320.2ZM2116.08 1320.2V1308.98H2117.2V1320.2ZM2117.2 1320.2V1308.98H2118.32V1320.2ZM2118.32 1320.2V1308.98H2119.44V1320.2ZM2119.44 1320.2V1308.98H2120.56V1320.2ZM2120.56 1320.2V1308.98H2121.69V1320.2ZM2121.69 1320.2V1308.98H2122.81V1320.2ZM2122.81 1320.2V1308.98H2123.93V1320.2ZM2125.05 1320.2V1308.98H2126.17V1320.2ZM2126.17 1320.2V1308.98H2127.3V1320.2ZM2127.3 1320.2V1308.98H2128.42V1320.2ZM2128.42 1320.2V1308.98H2129.54V1320.2ZM2129.54 1320.2V1297.76H2130.66V1320.2ZM2131.78 1320.2V1308.98H2132.9V1320.2ZM2132.9 1320.2V1297.76H2134.03V1320.2ZM2134.03 1320.2V1308.98H2135.15V1320.2ZM2135.15 1320.2V1308.98H2136.27V1320.2ZM2136.27 1320.2V1308.98H2137.39V1320.2ZM2137.39 1320.2V1308.98H2138.51V1320.2ZM2138.51 1320.2V1308.98H2139.64V1320.2ZM2139.64 1320.2V1308.98H2140.76V1320.2ZM2140.76 1320.2V1308.98H2141.88V1320.2ZM2141.88 1320.2V1308.98H2143V1320.2ZM2143 1320.2V1297.76H2144.12V1320.2ZM2144.12 1320.2V1297.76H2145.25V1320.2ZM2145.25 1320.2V1308.98H2146.37V1320.2ZM2146.37 1320.2V1308.98H2147.49V1320.2ZM2147.49 1320.2V1308.98H2148.61V1320.2ZM2148.61 1320.2V1297.76H2149.73V1320.2ZM2149.73 1320.2V1308.98H2150.85V1320.2ZM2150.85 1320.2V1297.76H2151.98V1320.2ZM2151.98 1320.2V1308.98H2153.1V1320.2ZM2153.1 1320.2V1308.98H2154.22V1320.2ZM2154.22 1320.2V1308.98H2155.34V1320.2ZM2155.34 1320.2V1308.98H2156.46V1320.2ZM2156.46 1320.2V1297.76H2157.59V1320.2ZM2157.59 1320.2V1308.98H2158.71V1320.2ZM2158.71 1320.2V1308.98H2159.83V1320.2ZM2159.83 1320.2V1308.98H2160.95V1320.2ZM2160.95 1320.2V1297.76H2162.07V1320.2ZM2162.07 1320.2V1308.98H2163.2V1320.2ZM2163.2 1320.2V1308.98H2164.32V1320.2ZM2164.32 1320.2V1308.98H2165.44V1320.2ZM2165.44 1320.2V1297.76H2166.56V1320.2ZM2166.56 1320.2V1308.98H2167.68V1320.2ZM2167.68 1320.2V1308.98H2168.8V1320.2ZM2168.8 1320.2V1308.98H2169.93V1320.2ZM2169.93 1320.2V1308.98H2171.05V1320.2ZM2171.05 1320.2V1308.98H2172.17V1320.2ZM2172.17 1320.2V1297.76H2173.29V1320.2ZM2173.29 1320.2V1308.98H2174.41V1320.2ZM2174.41 1320.2V1308.98H2175.54V1320.2ZM2175.54 1320.2V1308.98H2176.66V1320.2ZM2176.66 1320.2V1308.98H2177.78V1320.2ZM2177.78 1320.2V1297.76H2178.9V1320.2ZM2178.9 1320.2V1297.76H2180.02V1320.2ZM2180.02 1320.2V1308.98H2181.15V1320.2ZM2181.15 1320.2V1297.76H2182.27V1320.2ZM2182.27 1320.2V1308.98H2183.39V1320.2ZM2183.39 1320.2V1297.76H2184.51V1320.2ZM2184.51 1320.2V1308.98H2185.63V1320.2ZM2185.63 1320.2V1308.98H2186.75V1320.2ZM2186.75 1320.2V1308.98H2187.88V1320.2ZM2189 1320.2V1308.98H2190.12V1320.2ZM2190.12 1320.2V1308.98H2191.24V1320.2ZM2191.24 1320.2V1308.98H2192.36V1320.2ZM2192.36 1320.2V1308.98H2193.49V1320.2ZM2193.49 1320.2V1308.98H2194.61V1320.2ZM2194.61 1320.2V1308.98H2195.73V1320.2ZM2195.73 1320.2V1308.98H2196.85V1320.2ZM2196.85 1320.2V1308.98H2197.97V1320.2ZM2197.97 1320.2V1308.98H2199.1V1320.2ZM2199.1 1320.2V1308.98H2200.22V1320.2ZM2200.22 1320.2V1308.98H2201.34V1320.2ZM2202.46 1320.2V1308.98H2203.58V1320.2ZM2203.58 1320.2V1308.98H2204.7V1320.2ZM2204.7 1320.2V1308.98H2205.83V1320.2ZM2205.83 1320.2V1308.98H2206.95V1320.2ZM2206.95 1320.2V1308.98H2208.07V1320.2ZM2208.07 1320.2V1308.98H2209.19V1320.2ZM2209.19 1320.2V1308.98H2210.31V1320.2ZM2211.44 1320.2V1308.98H2212.56V1320.2ZM2212.56 1320.2V1308.98H2213.68V1320.2ZM2213.68 1320.2V1308.98H2214.8V1320.2ZM2214.8 1320.2V1308.98H2215.92V1320.2ZM2215.92 1320.2V1297.76H2217.05V1320.2ZM2217.05 1320.2V1308.98H2218.17V1320.2ZM2218.17 1320.2V1308.98H2219.29V1320.2ZM2219.29 1320.2V1308.98H2220.41V1320.2ZM2220.41 1320.2V1308.98H2221.53V1320.2ZM2221.53 1320.2V1308.98H2222.65V1320.2ZM2222.65 1320.2V1308.98H2223.78V1320.2ZM2223.78 1320.2V1308.98H2224.9V1320.2ZM2224.9 1320.2V1308.98H2226.02V1320.2ZM2226.02 1320.2V1308.98H2227.14V1320.2ZM2227.14 1320.2V1308.98H2228.26V1320.2ZM2228.26 1320.2V1308.98H2229.39V1320.2ZM2229.39 1320.2V1308.98H2230.51V1320.2ZM2230.51 1320.2V1308.98H2231.63V1320.2ZM2231.63 1320.2V1308.98H2232.75V1320.2ZM2232.75 1320.2V1308.98H2233.87V1320.2ZM2233.87 1320.2V1308.98H2235V1320.2ZM2235 1320.2V1308.98H2236.12V1320.2ZM2236.12 1320.2V1308.98H2237.24V1320.2ZM2237.24 1320.2V1308.98H2238.36V1320.2ZM2238.36 1320.2V1308.98H2239.48V1320.2ZM2239.48 1320.2V1308.98H2240.6V1320.2ZM2240.6 1320.2V1308.98H2241.73V1320.2ZM2243.97 1320.2V1308.98H2245.09V1320.2ZM2245.09 1320.2V1308.98H2246.21V1320.2ZM2246.21 1320.2V1308.98H2247.34V1320.2ZM2247.34 1320.2V1308.98H2248.46V1320.2ZM2248.46 1320.2V1308.98H2249.58V1320.2ZM2249.58 1320.2V1308.98H2250.7V1320.2ZM2250.7 1320.2V1308.98H2251.82V1320.2ZM2251.82 1320.2V1308.98H2252.95V1320.2ZM2252.95 1320.2V1308.98H2254.07V1320.2ZM2254.07 1320.2V1308.98H2255.19V1320.2ZM2256.31 1320.2V1308.98H2257.43V1320.2ZM2257.43 1320.2V1308.98H2258.55V1320.2ZM2258.55 1320.2V1308.98H2259.68V1320.2ZM2259.68 1320.2V1308.98H2260.8V1320.2ZM2260.8 1320.2V1308.98H2261.92V1320.2ZM2263.04 1320.2V1308.98H2264.16V1320.2ZM2264.16 1320.2V1308.98H2265.29V1320.2ZM2265.29 1320.2V1308.98H2266.41V1320.2ZM2266.41 1320.2V1308.98H2267.53V1320.2ZM2267.53 1320.2V1308.98H2268.65V1320.2ZM2268.65 1320.2V1308.98H2269.77V1320.2ZM2269.77 1320.2V1308.98H2270.9V1320.2ZM2270.9 1320.2V1308.98H2272.02V1320.2ZM2272.02 1320.2V1308.98H2273.14V1320.2ZM2273.14 1320.2V1308.98H2274.26V1320.2ZM2275.38 1320.2V1308.98H2276.5V1320.2ZM2276.5 1320.2V1308.98H2277.63V1320.2ZM2277.63 1320.2V1308.98H2278.75V1320.2ZM2278.75 1320.2V1308.98H2279.87V1320.2ZM2279.87 1320.2V1308.98H2280.99V1320.2ZM2280.99 1320.2V1308.98H2282.11V1320.2ZM2283.24 1320.2V1308.98H2284.36V1320.2ZM2284.36 1320.2V1308.98H2285.48V1320.2ZM2285.48 1320.2V1308.98H2286.6V1320.2ZM2289.97 1320.2V1308.98H2291.09V1320.2ZM2291.09 1320.2V1308.98H2292.21V1320.2ZM2292.21 1320.2V1308.98H2293.33V1320.2ZM2293.33 1320.2V1308.98H2294.45V1320.2ZM2294.45 1320.2V1308.98H2295.58V1320.2ZM2295.58 1320.2V1308.98H2296.7V1320.2ZM2296.7 1320.2V1308.98H2297.82V1320.2ZM2297.82 1320.2V1308.98H2298.94V1320.2ZM2298.94 1320.2V1308.98H2300.06V1320.2ZM2300.06 1320.2V1308.98H2301.19V1320.2ZM2301.19 1320.2V1308.98H2302.31V1320.2ZM2302.31 1320.2V1308.98H2303.43V1320.2ZM2304.55 1320.2V1308.98H2305.67V1320.2ZM2305.67 1320.2V1308.98H2306.8V1320.2ZM2306.8 1320.2V1308.98H2307.92V1320.2ZM2307.92 1320.2V1308.98H2309.04V1320.2ZM2310.16 1320.2V1308.98H2311.28V1320.2Z"/>
<path fill="#239071" d="M235.81 1320.2V1297.76H236.94V1320.2ZM236.94 1320.2V1297.76H238.06V1320.2ZM238.06 1320.2V1297.76H239.18V1320.2ZM239.18 1320.2V1297.76H240.3V1320.2ZM240.3 1320.2V1297.76H241.42V1320.2ZM241.42 1320.2V1297.76H242.55V1320.2ZM242.55 1320.2V1308.98H243.67V1320.2ZM243.67 1320.2V1308.98H244.79V1320.2ZM244.79 1320.2V1297.76H245.91V1320.2ZM245.91 1320.2V1297.76H247.03V1320.2ZM247.03 1320.2V1297.76H248.15V1320.2ZM248.15 1320.2V1297.76H249.28V1320.2ZM249.28 1320.2V1297.76H250.4V1320.2ZM250.4 1320.2V1297.76H251.52V1320.2ZM251.52 1320.2V1297.76H252.64V1320.2ZM252.64 1320.2V1297.76H253.76V1320.2ZM253.76 1320.2V1297.76H254.89V1320.2ZM254.89 1320.2V1297.76H256.01V1320.2ZM256.01 1320.2V1297.76H257.13V1320.2ZM257.13 1320.2V1297.76H258.25V1320.2ZM258.25 1320.2V1297.76H259.37V1320.2ZM259.37 1320.2V1297.76H260.5V1320.2ZM260.5 1320.2V1286.53H261.62V1320.2ZM261.62 1320.2V1286.53H262.74V1320.2ZM262.74 1320.2V1308.98H263.86V1320.2ZM263.86 1320.2V1297.76H264.98V1320.2ZM264.98 1320.2V1297.76H266.1V1320.2ZM266.1 1320.2V1297.76H267.23V1320.2ZM267.23 1320.2V1297.76H268.35V1320.2ZM268.35 1320.2V1308.98H269.47V1320.2ZM269.47 1320.2V1297.76H270.59V1320.2ZM270.59 1320.2V1308.98H271.71V1320.2ZM271.71 1320.2V1308.98H272.84V1320.2ZM272.84 1320.2V1297.76H273.96V1320.2ZM273.96 1320.2V1297.76H275.08V1320.2ZM275.08 1320.2V1308.98H276.2V1320.2ZM276.2 1320.2V1308.98H277.32V1320.2ZM277.32 1320.2V1308.98H278.45V1320.2ZM278.45 1320.2V1308.98H279.57V1320.2ZM279.57 1320.2V1308.98H280.69V1320.2ZM280.69 1320.2V1308.98H281.81V1320.2ZM281.81 1320.2V1308.98H282.93V1320.2ZM282.93 1320.2V1308.98H284.05V1320.2ZM284.05 1320.2V1308.98H285.18V1320.2ZM285.18 1320.2V1308.98H286.3V1320.2ZM286.3 1320.2V1308.98H287.42V1320.2ZM287.42 1320.2V1308.98H288.54V1320.2ZM288.54 1320.2V1308.98H289.66V1320.2ZM289.66 1320.2V1308.98H290.79V1320.2ZM290.79 1320.2V1308.98H291.91V1320.2ZM291.91 1320.2V1308.98H293.03V1320.2ZM293.03 1320.2V1308.98H294.15V1320.2ZM295.27 1320.2V1308.98H296.4V1320.2ZM296.4 1320.2V1308.98H297.52V1320.2ZM297.52 1320.2V1308.98H298.64V1320.2ZM298.64 1320.2V1308.98H299.76V1320.2ZM300.88 1320.2V1308.98H302V1320.2ZM302 1320.2V1308.98H303.13V1320.2ZM304.25 1320.2V1308.98H305.37V1320.2ZM308.74 1320.2V1308.98H309.86V1320.2ZM312.1 1320.2V1308.98H313.22V1320.2ZM313.22 1320.2V1308.98H314.35V1320.2ZM315.47 1320.2V1308.98H316.59V1320.2ZM316.59 1320.2V1308.98H317.71V1320.2ZM317.71 1320.2V1308.98H318.83V1320.2ZM318.83 1320.2V1308.98H319.95V1320.2ZM319.95 1320.2V1308.98H321.08V1320.2ZM322.2 1320.2V1308.98H323.32V1320.2ZM323.32 1320.2V1308.98H324.44V1320.2ZM324.44 1320.2V1308.98H325.56V1320.2ZM325.56 1320.2V1308.98H326.69V1320.2ZM331.17 1320.2V1308.98H332.3V1320.2ZM332.3 1320.2V1308.98H333.42V1320.2ZM335.66 1320.2V1308.98H336.78V1320.2ZM336.78 1320.2V1308.98H337.9V1320.2ZM337.9 1320.2V1308.98H339.03V1320.2ZM339.03 1320.2V1308.98H340.15V1320.2ZM340.15 1320.2V1308.98H341.27V1320.2ZM341.27 1320.2V1308.98H342.39V1320.2ZM342.39 1320.2V1308.98H343.51V1320.2ZM343.51 1320.2V1308.98H344.64V1320.2ZM345.76 1320.2V1308.98H346.88V1320.2ZM346.88 1320.2V1308.98H348V1320.2ZM348 1320.2V1308.98H349.12V1320.2ZM349.12 1320.2V1308.98H350.25V1320.2ZM350.25 1320.2V1308.98H351.37V1320.2ZM351.37 1320.2V1308.98H352.49V1320.2ZM353.61 1320.2V1308.98H354.73V1320.2ZM359.22 1320.2V1308.98H360.34V1320.2ZM364.83 1320.2V1308.98H365.95V1320.2ZM367.07 1320.2V1308.98H368.2V1320.2ZM368.2 1320.2V1308.98H369.32V1320.2ZM371.56 1320.2V1308.98H372.68V1320.2ZM372.68 1320.2V1308.98H373.8V1320.2ZM374.93 1320.2V1308.98H376.05V1320.2ZM376.05 1320.2V1308.98H377.17V1320.2ZM377.17 1320.2V1308.98H378.29V1320.2ZM378.29 1320.2V1308.98H379.41V1320.2ZM381.66 1320.2V1308.98H382.78V1320.2ZM558.91 1320.2V1286.53H560.04V1320.2ZM560.04 1320.2V1286.53H561.16V1320.2ZM561.16 1320.2V1297.76H562.28V1320.2ZM562.28 1320.2V1297.76H563.4V1320.2ZM563.4 1320.2V1286.53H564.52V1320.2ZM564.52 1320.2V1286.53H565.65V1320.2ZM565.65 1320.2V1286.53H566.77V1320.2ZM566.77 1320.2V1286.53H567.89V1320.2ZM567.89 1320.2V1207.98H569.01V1320.2ZM569.01 1320.2V1207.98H570.13V1320.2ZM570.13 1320.2V1174.31H571.25V1320.2ZM571.25 1320.2V1174.31H572.38V1320.2ZM572.38 1320.2V1005.98H573.5V1320.2ZM573.5 1320.2V1005.98H574.62V1320.2ZM574.62 1320.2V972.32H575.74V1320.2ZM575.74 1320.2V972.32H576.86V1320.2ZM576.86 1320.2V1039.65H577.99V1320.2ZM577.99 1320.2V1039.65H579.11V1320.2ZM579.11 1320.2V1017.21H580.23V1320.2ZM580.23 1320.2V1017.21H581.35V1320.2ZM581.35 1320.2V938.65H582.47V1320.2ZM582.47 1320.2V927.43H583.6V1320.2ZM583.6 1320.2V927.43H584.72V1320.2ZM584.72 1320.2V972.32H585.84V1320.2ZM585.84 1320.2V938.65H586.96V1320.2ZM586.96 1320.2V938.65H588.08V1320.2ZM588.08 1320.2V1039.65H589.2V1320.2ZM589.2 1320.2V1039.65H590.33V1320.2ZM590.33 1320.2V1163.09H591.45V1320.2ZM591.45 1320.2V1219.2H592.57V1320.2ZM592.57 1320.2V1219.2H593.69V1320.2ZM593.69 1320.2V1140.65H594.81V1320.2ZM594.81 1320.2V1140.65H595.94V1320.2ZM595.94 1320.2V1241.65H597.06V1320.2ZM597.06 1320.2V1241.65H598.18V1320.2ZM598.18 1320.2V1174.31H599.3V1320.2ZM599.3 1320.2V1174.31H600.42V1320.2ZM600.42 1320.2V1174.31H601.55V1320.2ZM601.55 1320.2V1174.31H602.67V1320.2ZM602.67 1320.2V1073.32H603.79V1320.2ZM603.79 1320.2V972.32H604.91V1320.2ZM604.91 1320.2V972.32H606.03V1320.2ZM606.03 1320.2V1039.65H607.15V1320.2ZM607.15 1320.2V1039.65H608.28V1320.2ZM608.28 1320.2V1017.21H609.4V1320.2ZM609.4 1320.2V961.1H610.52V1320.2ZM610.52 1320.2V961.1H611.64V1320.2ZM611.64 1320.2V1028.43H612.76V1320.2ZM612.76 1320.2V1106.98H613.89V1320.2ZM613.89 1320.2V1106.98H615.01V1320.2ZM615.01 1320.2V1005.98H616.13V1320.2ZM616.13 1320.2V1005.98H617.25V1320.2ZM617.25 1320.2V994.76H618.37V1320.2ZM618.37 1320.2V1017.21H619.5V1320.2ZM619.5 1320.2V1174.31H620.62V1320.2ZM620.62 1320.2V1174.31H621.74V1320.2ZM621.74 1320.2V1219.2H622.86V1320.2ZM622.86 1320.2V1219.2H623.98V1320.2ZM623.98 1320.2V1196.76H625.1V1320.2ZM625.1 1320.2V1196.76H626.23V1320.2ZM626.23 1320.2V1241.65H627.35V1320.2ZM627.35 1320.2V1241.65H628.47V1320.2ZM628.47 1320.2V1163.09H629.59V1320.2ZM629.59 1320.2V1163.09H630.71V1320.2ZM630.71 1320.2V1129.43H631.84V1320.2ZM631.84 1320.2V1129.43H632.96V1320.2ZM632.96 1320.2V1151.87H634.08V1320.2ZM634.08 1320.2V1151.87H635.2V1320.2ZM635.2 1320.2V1219.2H636.32V1320.2ZM636.32 1320.2V1219.2H637.45V1320.2ZM637.45 1320.2V1241.65H638.57V1320.2ZM638.57 1320.2V1241.65H639.69V1320.2ZM639.69 1320.2V1241.65H640.81V1320.2ZM640.81 1320.2V1196.76H641.93V1320.2ZM641.93 1320.2V1196.76H643.05V1320.2ZM643.05 1320.2V1241.65H644.18V1320.2ZM644.18 1320.2V1241.65H645.3V1320.2ZM645.3 1320.2V1230.42H646.42V1320.2ZM646.42 1320.2V1230.42H647.54V1320.2ZM647.54 1320.2V1241.65H648.66V1320.2ZM648.66 1320.2V1252.87H649.79V1320.2ZM649.79 1320.2V1252.87H650.91V1320.2ZM650.91 1320.2V1207.98H652.03V1320.2ZM652.03 1320.2V1129.43H653.15V1320.2ZM653.15 1320.2V983.54H654.27V1320.2ZM654.27 1320.2V983.54H655.4V1320.2ZM655.4 1320.2V1017.21H656.52V1320.2ZM656.52 1320.2V1017.21H657.64V1320.2ZM657.64 1320.2V1106.98H658.76V1320.2ZM658.76 1320.2V1163.09H659.88V1320.2ZM659.88 1320.2V1163.09H661V1320.2ZM661 1320.2V1118.2H662.13V1320.2ZM662.13 1320.2V983.54H663.25V1320.2ZM663.25 1320.2V983.54H664.37V1320.2ZM664.37 1320.2V916.21H665.49V1320.2ZM665.49 1320.2V916.21H666.61V1320.2ZM666.61 1320.2V1050.87H667.74V1320.2ZM667.74 1320.2V1050.87H668.86V1320.2ZM668.86 1320.2V1174.31H669.98V1320.2ZM669.98 1320.2V1174.31H671.1V1320.2ZM671.1 1320.2V1174.31H672.22V1320.2ZM672.22 1320.2V1241.65H673.35V1320.2ZM673.35 1320.2V1005.98H674.47V1320.2ZM674.47 1320.2V1005.98H675.59V1320.2ZM675.59 1320.2V1095.76H676.71V1320.2ZM676.71 1320.2V1163.09H677.83V1320.2ZM677.83 1320.2V1163.09H678.95V1320.2ZM678.95 1320.2V1163.09H680.08V1320.2ZM680.08 1320.2V1174.31H681.2V1320.2ZM681.2 1320.2V1174.31H682.32V1320.2ZM682.32 1320.2V1174.31H683.44V1320.2ZM683.44 1320.2V1174.31H684.56V1320.2ZM684.56 1320.2V1196.76H685.69V1320.2ZM685.69 1320.2V1196.76H686.81V1320.2ZM686.81 1320.2V1219.2H687.93V1320.2ZM687.93 1320.2V1219.2H689.05V1320.2ZM689.05 1320.2V1219.2H690.17V1320.2ZM690.17 1320.2V1196.76H691.3V1320.2ZM691.3 1320.2V1230.42H692.42V1320.2ZM692.42 1320.2V1230.42H693.54V1320.2ZM693.54 1320.2V1230.42H694.66V1320.2ZM694.66 1320.2V1219.2H695.78V1320.2ZM695.78 1320.2V1219.2H696.9V1320.2ZM696.9 1320.2V1241.65H698.03V1320.2ZM698.03 1320.2V1241.65H699.15V1320.2ZM699.15 1320.2V1241.65H700.27V1320.2ZM700.27 1320.2V1252.87H701.39V1320.2ZM701.39 1320.2V1252.87H702.51V1320.2ZM702.51 1320.2V1252.87H703.64V1320.2ZM703.64 1320.2V1252.87H704.76V1320.2ZM704.76 1320.2V1252.87H705.88V1320.2ZM705.88 1320.2V1252.87H707V1320.2ZM882.01 1320.2V1275.31H883.14V1320.2ZM883.14 1320.2V1275.31H884.26V1320.2ZM884.26 1320.2V1275.31H885.38V1320.2ZM885.38 1320.2V1275.31H886.5V1320.2ZM886.5 1320.2V1275.31H887.62V1320.2ZM887.62 1320.2V1275.31H888.75V1320.2ZM888.75 1320.2V1275.31H889.87V1320.2ZM889.87 1320.2V1286.53H890.99V1320.2ZM890.99 1320.2V1275.31H892.11V1320.2ZM892.11 1320.2V1275.31H893.23V1320.2ZM893.23 1320.2V1219.2H894.35V1320.2ZM894.35 1320.2V1219.2H895.48V1320.2ZM895.48 1320.2V1017.21H896.6V1320.2ZM896.6 1320.2V961.1H897.72V1320.2ZM897.72 1320.2V961.1H898.84V1320.2ZM898.84 1320.2V972.32H899.96V1320.2ZM899.96 1320.2V1050.87H901.09V1320.2ZM901.09 1320.2V927.43H902.21V1320.2ZM902.21 1320.2V927.43H903.33V1320.2ZM903.33 1320.2V904.99H904.45V1320.2ZM904.45 1320.2V972.32H905.57V1320.2ZM905.57 1320.2V1073.32H906.7V1320.2ZM906.7 1320.2V1039.65H907.82V1320.2ZM907.82 1320.2V1039.65H908.94V1320.2ZM908.94 1320.2V949.87H910.06V1320.2ZM910.06 1320.2V949.87H911.18V1320.2ZM911.18 1320.2V1028.43H912.3V1320.2ZM912.3 1320.2V1140.65H913.43V1320.2ZM913.43 1320.2V1073.32H914.55V1320.2ZM914.55 1320.2V1073.32H915.67V1320.2ZM915.67 1320.2V1073.32H916.79V1320.2ZM916.79 1320.2V1174.31H917.91V1320.2ZM917.91 1320.2V1118.2H919.04V1320.2ZM919.04 1320.2V1118.2H920.16V1320.2ZM920.16 1320.2V1106.98H921.28V1320.2ZM921.28 1320.2V1185.54H922.4V1320.2ZM922.4 1320.2V1185.54H923.52V1320.2ZM923.52 1320.2V1219.2H924.65V1320.2ZM924.65 1320.2V1219.2H925.77V1320.2ZM925.77 1320.2V1219.2H926.89V1320.2ZM926.89 1320.2V1106.98H928.01V1320.2ZM928.01 1320.2V1106.98H929.13V1320.2ZM929.13 1320.2V1062.09H930.25V1320.2ZM930.25 1320.2V893.76H931.38V1320.2ZM931.38 1320.2V893.76H932.5V1320.2ZM932.5 1320.2V1062.09H933.62V1320.2ZM933.62 1320.2V1062.09H934.74V1320.2ZM934.74 1320.2V1017.21H935.86V1320.2ZM935.86 1320.2V1017.21H936.99V1320.2ZM936.99 1320.2V983.54H938.11V1320.2ZM938.11 1320.2V860.1H939.23V1320.2ZM939.23 1320.2V860.1H940.35V1320.2ZM940.35 1320.2V961.1H941.47V1320.2ZM941.47 1320.2V949.87H942.6V1320.2ZM942.6 1320.2V972.32H943.72V1320.2ZM943.72 1320.2V972.32H944.84V1320.2ZM944.84 1320.2V972.32H945.96V1320.2ZM945.96 1320.2V1207.98H947.08V1320.2ZM947.08 1320.2V1207.98H948.2V1320.2ZM948.2 1320.2V1185.54H949.33V1320.2ZM949.33 1320.2V1219.2H950.45V1320.2ZM950.45 1320.2V1219.2H951.57V1320.2ZM951.57 1320.2V1219.2H952.69V1320.2ZM952.69 1320.2V1196.76H953.81V1320.2ZM953.81 1320.2V1196.76H954.94V1320.2ZM954.94 1320.2V1185.54H956.06V1320.2ZM956.06 1320.2V1185.54H957.18V1320.2ZM957.18 1320.2V1050.87H958.3V1320.2ZM958.3 1320.2V994.76H959.42V1320.2ZM959.42 1320.2V893.76H960.55V1320.2ZM960.55 1320.2V893.76H961.67V1320.2ZM961.67 1320.2V1196.76H962.79V1320.2ZM962.79 1320.2V1196.76H963.91V1320.2ZM963.91 1320.2V1196.76H965.03V1320.2ZM965.03 1320.2V1230.42H966.15V1320.2ZM966.15 1320.2V1230.42H967.28V1320.2ZM967.28 1320.2V1196.76H968.4V1320.2ZM968.4 1320.2V1196.76H969.52V1320.2ZM969.52 1320.2V1241.65H970.64V1320.2ZM970.64 1320.2V1241.65H971.76V1320.2ZM971.76 1320.2V1140.65H972.89V1320.2ZM972.89 1320.2V916.21H974.01V1320.2ZM974.01 1320.2V916.21H975.13V1320.2ZM975.13 1320.2V961.1H976.25V1320.2ZM976.25 1320.2V961.1H977.37V1320.2ZM977.37 1320.2V1118.2H978.5V1320.2ZM978.5 1320.2V1118.2H979.62V1320.2ZM979.62 1320.2V1151.87H980.74V1320.2ZM980.74 1320.2V1151.87H981.86V1320.2ZM981.86 1320.2V1151.87H982.98V1320.2ZM982.98 1320.2V1185.54H984.1V1320.2ZM984.1 1320.2V1185.54H985.23V1320.2ZM985.23 1320.2V1185.54H986.35V1320.2ZM986.35 1320.2V1140.65H987.47V1320.2ZM987.47 1320.2V1140.65H988.59V1320.2ZM988.59 1320.2V1151.87H989.71V1320.2ZM989.71 1320.2V1207.98H990.84V1320.2ZM990.84 1320.2V1207.98H991.96V1320.2ZM991.96 1320.2V1185.54H993.08V1320.2ZM993.08 1320.2V1028.43H994.2V1320.2ZM994.2 1320.2V1028.43H995.32V1320.2ZM995.32 1320.2V1084.54H996.45V1320.2ZM996.45 1320.2V1084.54H997.57V1320.2ZM997.57 1320.2V949.87H998.69V1320.2ZM998.69 1320.2V949.87H999.81V1320.2ZM999.81 1320.2V1196.76H1000.93V1320.2ZM1000.93 1320.2V1196.76H1002.05V1320.2ZM1002.05 1320.2V1230.42H1003.18V1320.2ZM1003.18 1320.2V1230.42H1004.3V1320.2ZM1004.3 1320.2V1230.42H1005.42V1320.2ZM1005.42 1320.2V1230.42H1006.54V1320.2ZM1006.54 1320.2V1151.87H1007.66V1320.2ZM1007.66 1320.2V1151.87H1008.79V1320.2ZM1008.79 1320.2V1185.54H1009.91V1320.2ZM1009.91 1320.2V1185.54H1011.03V1320.2ZM1011.03 1320.2V1230.42H1012.15V1320.2ZM1012.15 1320.2V1230.42H1013.27V1320.2ZM1013.27 1320.2V1241.65H1014.4V1320.2ZM1014.4 1320.2V1241.65H1015.52V1320.2ZM1015.52 1320.2V1219.2H1016.64V1320.2ZM1016.64 1320.2V1219.2H1017.76V1320.2ZM1017.76 1320.2V1275.31H1018.88V1320.2ZM1018.88 1320.2V1275.31H1020V1320.2ZM1020 1320.2V1219.2H1021.13V1320.2ZM1021.13 1320.2V1219.2H1022.25V1320.2ZM1022.25 1320.2V1230.42H1023.37V1320.2ZM1023.37 1320.2V1230.42H1024.49V1320.2ZM1024.49 1320.2V1241.65H1025.61V1320.2ZM1025.61 1320.2V1241.65H1026.74V1320.2ZM1026.74 1320.2V1241.65H1027.86V1320.2ZM1027.86 1320.2V1230.42H1028.98V1320.2ZM1028.98 1320.2V1230.42H1030.1V1320.2ZM1205.11 1320.2V1286.53H1206.24V1320.2ZM1206.24 1320.2V1286.53H1207.36V1320.2ZM1207.36 1320.2V1286.53H1208.48V1320.2ZM1208.48 1320.2V1286.53H1209.6V1320.2ZM1209.6 1320.2V1275.31H1210.72V1320.2ZM1210.72 1320.2V1219.2H1211.85V1320.2ZM1211.85 1320.2V1207.98H1212.97V1320.2ZM1212.97 1320.2V1207.98H1214.09V1320.2ZM1214.09 1320.2V1185.54H1215.21V1320.2ZM1215.21 1320.2V1219.2H1216.33V1320.2ZM1216.33 1320.2V1219.2H1217.45V1320.2ZM1217.45 1320.2V1174.31H1218.58V1320.2ZM1218.58 1320.2V1207.98H1219.7V1320.2ZM1219.7 1320.2V1207.98H1220.82V1320.2ZM1220.82 1320.2V1017.21H1221.94V1320.2ZM1221.94 1320.2V961.1H1223.06V1320.2ZM1223.06 1320.2V961.1H1224.19V1320.2ZM1224.19 1320.2V972.32H1225.31V1320.2ZM1225.31 1320.2V848.88H1226.43V1320.2ZM1226.43 1320.2V848.88H1227.55V1320.2ZM1227.55 1320.2V848.88H1228.67V1320.2ZM1228.67 1320.2V1129.43H1229.8V1320.2ZM1229.8 1320.2V1129.43H1230.92V1320.2ZM1230.92 1320.2V1174.31H1232.04V1320.2ZM1232.04 1320.2V1174.31H1233.16V1320.2ZM1233.16 1320.2V1196.76H1234.28V1320.2ZM1234.28 1320.2V1196.76H1235.4V1320.2ZM1235.4 1320.2V1062.09H1236.53V1320.2ZM1236.53 1320.2V1062.09H1237.65V1320.2ZM1237.65 1320.2V1084.54H1238.77V1320.2ZM1238.77 1320.2V1017.21H1239.89V1320.2ZM1239.89 1320.2V938.65H1241.01V1320.2ZM1241.01 1320.2V904.99H1242.14V1320.2ZM1242.14 1320.2V871.32H1243.26V1320.2ZM1243.26 1320.2V871.32H1244.38V1320.2ZM1244.38 1320.2V1151.87H1245.5V1320.2ZM1245.5 1320.2V1151.87H1246.62V1320.2ZM1246.62 1320.2V1084.54H1247.75V1320.2ZM1247.75 1320.2V916.21H1248.87V1320.2ZM1248.87 1320.2V916.21H1249.99V1320.2ZM1249.99 1320.2V1084.54H1251.11V1320.2ZM1251.11 1320.2V1084.54H1252.23V1320.2ZM1252.23 1320.2V1084.54H1253.35V1320.2ZM1253.35 1320.2V972.32H1254.48V1320.2ZM1254.48 1320.2V938.65H1255.6V1320.2ZM1255.6 1320.2V927.43H1256.72V1320.2ZM1256.72 1320.2V927.43H1257.84V1320.2ZM1257.84 1320.2V1129.43H1258.96V1320.2ZM1258.96 1320.2V1219.2H1260.09V1320.2ZM1260.09 1320.2V1219.2H1261.21V1320.2ZM1261.21 1320.2V1207.98H1262.33V1320.2ZM1262.33 1320.2V1207.98H1263.45V1320.2ZM1263.45 1320.2V1252.87H1264.57V1320.2ZM1264.57 1320.2V1252.87H1265.7V1320.2ZM1265.7 1320.2V1252.87H1266.82V1320.2ZM1266.82 1320.2V1196.76H1267.94V1320.2ZM1267.94 1320.2V1174.31H1269.06V1320.2ZM1269.06 1320.2V1174.31H1270.18V1320.2ZM1270.18 1320.2V1230.42H1271.3V1320.2ZM1271.3 1320.2V1196.76H1272.43V1320.2ZM1272.43 1320.2V1196.76H1273.55V1320.2ZM1273.55 1320.2V1230.42H1274.67V1320.2ZM1274.67 1320.2V1230.42H1275.79V1320.2ZM1275.79 1320.2V1017.21H1276.91V1320.2ZM1276.91 1320.2V1017.21H1278.04V1320.2ZM1278.04 1320.2V983.54H1279.16V1320.2ZM1279.16 1320.2V1106.98H1280.28V1320.2ZM1280.28 1320.2V1118.2H1281.4V1320.2ZM1281.4 1320.2V1118.2H1282.52V1320.2ZM1282.52 1320.2V1252.87H1283.65V1320.2ZM1283.65 1320.2V1252.87H1284.77V1320.2ZM1284.77 1320.2V1129.43H1285.89V1320.2ZM1285.89 1320.2V1129.43H1287.01V1320.2ZM1287.01 1320.2V1219.2H1288.13V1320.2ZM1288.13 1320.2V1219.2H1289.25V1320.2ZM1289.25 1320.2V1241.65H1290.38V1320.2ZM1290.38 1320.2V1241.65H1291.5V1320.2ZM1291.5 1320.2V1196.76H1292.62V1320.2ZM1292.62 1320.2V1196.76H1293.74V1320.2ZM1293.74 1320.2V1028.43H1294.86V1320.2ZM1294.86 1320.2V1028.43H1295.99V1320.2ZM1295.99 1320.2V994.76H1297.11V1320.2ZM1297.11 1320.2V961.1H1298.23V1320.2ZM1298.23 1320.2V949.87H1299.35V1320.2ZM1299.35 1320.2V871.32H1300.47V1320.2ZM1300.47 1320.2V871.32H1301.6V1320.2ZM1301.6 1320.2V938.65H1302.72V1320.2ZM1302.72 1320.2V904.99H1303.84V1320.2ZM1303.84 1320.2V893.76H1304.96V1320.2ZM1304.96 1320.2V893.76H1306.08V1320.2ZM1306.08 1320.2V927.43H1307.2V1320.2ZM1307.2 1320.2V972.32H1308.33V1320.2ZM1308.33 1320.2V972.32H1309.45V1320.2ZM1309.45 1320.2V1118.2H1310.57V1320.2ZM1310.57 1320.2V1095.76H1311.69V1320.2ZM1311.69 1320.2V1095.76H1312.81V1320.2ZM1312.81 1320.2V1140.65H1313.94V1320.2ZM1313.94 1320.2V1140.65H1315.06V1320.2ZM1315.06 1320.2V1140.65H1316.18V1320.2ZM1316.18 1320.2V1017.21H1317.3V1320.2ZM1317.3 1320.2V1017.21H1318.42V1320.2ZM1318.42 1320.2V1005.98H1319.55V1320.2ZM1319.55 1320.2V1039.65H1320.67V1320.2ZM1320.67 1320.2V1039.65H1321.79V1320.2ZM1321.79 1320.2V1196.76H1322.91V1320.2ZM1322.91 1320.2V1196.76H1324.03V1320.2ZM1324.03 1320.2V1196.76H1325.15V1320.2ZM1325.15 1320.2V1118.2H1326.28V1320.2ZM1326.28 1320.2V1118.2H1327.4V1320.2ZM1327.4 1320.2V1185.54H1328.52V1320.2ZM1328.52 1320.2V1185.54H1329.64V1320.2ZM1329.64 1320.2V1185.54H1330.76V1320.2ZM1330.76 1320.2V1230.42H1331.89V1320.2ZM1331.89 1320.2V1230.42H1333.01V1320.2ZM1333.01 1320.2V1230.42H1334.13V1320.2ZM1334.13 1320.2V1241.65H1335.25V1320.2ZM1335.25 1320.2V1241.65H1336.37V1320.2ZM1336.37 1320.2V1230.42H1337.5V1320.2ZM1337.5 1320.2V1230.42H1338.62V1320.2ZM1338.62 1320.2V1230.42H1339.74V1320.2ZM1339.74 1320.2V1252.87H1340.86V1320.2ZM1340.86 1320.2V1252.87H1341.98V1320.2ZM1341.98 1320.2V1252.87H1343.1V1320.2ZM1343.1 1320.2V1252.87H1344.23V1320.2ZM1344.23 1320.2V1252.87H1345.35V1320.2ZM1345.35 1320.2V1252.87H1346.47V1320.2ZM1346.47 1320.2V1230.42H1347.59V1320.2ZM1347.59 1320.2V1230.42H1348.71V1320.2ZM1348.71 1320.2V1230.42H1349.84V1320.2ZM1349.84 1320.2V1252.87H1350.96V1320.2ZM1350.96 1320.2V1252.87H1352.08V1320.2ZM1352.08 1320.2V1252.87H1353.2V1320.2ZM1528.21 1320.2V1308.98H1529.34V1320.2ZM1529.34 1320.2V1308.98H1530.46V1320.2ZM1530.46 1320.2V1297.76H1531.58V1320.2ZM1531.58 1320.2V1308.98H1532.7V1320.2ZM1532.7 1320.2V1308.98H1533.82V1320.2ZM1533.82 1320.2V1297.76H1534.95V1320.2ZM1534.95 1320.2V1297.76H1536.07V1320.2ZM1536.07 1320.2V1252.87H1537.19V1320.2ZM1537.19 1320.2V1196.76H1538.31V1320.2ZM1538.31 1320.2V1196.76H1539.43V1320.2ZM1539.43 1320.2V1252.87H1540.55V1320.2ZM1540.55 1320.2V1252.87H1541.68V1320.2ZM1541.68 1320.2V1219.2H1542.8V1320.2ZM1542.8 1320.2V983.54H1543.92V1320.2ZM1543.92 1320.2V983.54H1545.04V1320.2ZM1545.04 1320.2V938.65H1546.16V1320.2ZM1546.16 1320.2V938.65H1547.29V1320.2ZM1547.29 1320.2V938.65H1548.41V1320.2ZM1548.41 1320.2V1207.98H1549.53V1320.2ZM1549.53 1320.2V1207.98H1550.65V1320.2ZM1550.65 1320.2V1207.98H1551.77V1320.2ZM1551.77 1320.2V927.43H1552.9V1320.2ZM1552.9 1320.2V927.43H1554.02V1320.2ZM1554.02 1320.2V904.99H1555.14V1320.2ZM1555.14 1320.2V904.99H1556.26V1320.2ZM1556.26 1320.2V961.1H1557.38V1320.2ZM1557.38 1320.2V1073.32H1558.5V1320.2ZM1558.5 1320.2V1219.2H1559.63V1320.2ZM1559.63 1320.2V1219.2H1560.75V1320.2ZM1560.75 1320.2V1241.65H1561.87V1320.2ZM1561.87 1320.2V1241.65H1562.99V1320.2ZM1562.99 1320.2V1196.76H1564.11V1320.2ZM1564.11 1320.2V1196.76H1565.24V1320.2ZM1565.24 1320.2V1196.76H1566.36V1320.2ZM1566.36 1320.2V1230.42H1567.48V1320.2ZM1567.48 1320.2V1230.42H1568.6V1320.2ZM1568.6 1320.2V994.76H1569.72V1320.2ZM1569.72 1320.2V972.32H1570.85V1320.2ZM1570.85 1320.2V961.1H1571.97V1320.2ZM1571.97 1320.2V961.1H1573.09V1320.2ZM1573.09 1320.2V1039.65H1574.21V1320.2ZM1574.21 1320.2V1039.65H1575.33V1320.2ZM1575.33 1320.2V1219.2H1576.45V1320.2ZM1576.45 1320.2V1219.2H1577.58V1320.2ZM1577.58 1320.2V1219.2H1578.7V1320.2ZM1578.7 1320.2V1219.2H1579.82V1320.2ZM1579.82 1320.2V1219.2H1580.94V1320.2ZM1580.94 1320.2V1129.43H1582.06V1320.2ZM1582.06 1320.2V1129.43H1583.19V1320.2ZM1583.19 1320.2V1230.42H1584.31V1320.2ZM1584.31 1320.2V1230.42H1585.43V1320.2ZM1585.43 1320.2V1185.54H1586.55V1320.2ZM1586.55 1320.2V1163.09H1587.67V1320.2ZM1587.67 1320.2V1017.21H1588.8V1320.2ZM1588.8 1320.2V1017.21H1589.92V1320.2ZM1589.92 1320.2V1174.31H1591.04V1320.2ZM1591.04 1320.2V1174.31H1592.16V1320.2ZM1592.16 1320.2V1140.65H1593.28V1320.2ZM1593.28 1320.2V1017.21H1594.4V1320.2ZM1594.4 1320.2V1017.21H1595.53V1320.2ZM1595.53 1320.2V1219.2H1596.65V1320.2ZM1596.65 1320.2V1219.2H1597.77V1320.2ZM1597.77 1320.2V1219.2H1598.89V1320.2ZM1598.89 1320.2V1219.2H1600.01V1320.2ZM1600.01 1320.2V1005.98H1601.14V1320.2ZM1601.14 1320.2V1005.98H1602.26V1320.2ZM1602.26 1320.2V972.32H1603.38V1320.2ZM1603.38 1320.2V1174.31H1604.5V1320.2ZM1604.5 1320.2V1174.31H1605.62V1320.2ZM1605.62 1320.2V1207.98H1606.75V1320.2ZM1606.75 1320.2V1207.98H1607.87V1320.2ZM1607.87 1320.2V1207.98H1608.99V1320.2ZM1608.99 1320.2V1196.76H1610.11V1320.2ZM1610.11 1320.2V1241.65H1611.23V1320.2ZM1611.23 1320.2V1230.42H1612.35V1320.2ZM1612.35 1320.2V1241.65H1613.48V1320.2ZM1613.48 1320.2V1241.65H1614.6V1320.2ZM1614.6 1320.2V1230.42H1615.72V1320.2ZM1615.72 1320.2V1230.42H1616.84V1320.2ZM1616.84 1320.2V1230.42H1617.96V1320.2ZM1617.96 1320.2V1084.54H1619.09V1320.2ZM1619.09 1320.2V1084.54H1620.21V1320.2ZM1620.21 1320.2V1039.65H1621.33V1320.2ZM1621.33 1320.2V1039.65H1622.45V1320.2ZM1622.45 1320.2V1084.54H1623.57V1320.2ZM1623.57 1320.2V916.21H1624.7V1320.2ZM1624.7 1320.2V916.21H1625.82V1320.2ZM1625.82 1320.2V927.43H1626.94V1320.2ZM1626.94 1320.2V927.43H1628.06V1320.2ZM1628.06 1320.2V1084.54H1629.18V1320.2ZM1629.18 1320.2V1084.54H1630.3V1320.2ZM1630.3 1320.2V1095.76H1631.43V1320.2ZM1631.43 1320.2V1095.76H1632.55V1320.2ZM1632.55 1320.2V1095.76H1633.67V1320.2ZM1633.67 1320.2V1140.65H1634.79V1320.2ZM1634.79 1320.2V1174.31H1635.91V1320.2ZM1635.91 1320.2V1174.31H1637.04V1320.2ZM1637.04 1320.2V1174.31H1638.16V1320.2ZM1638.16 1320.2V1219.2H1639.28V1320.2ZM1639.28 1320.2V1219.2H1640.4V1320.2ZM1640.4 1320.2V1241.65H1641.52V1320.2ZM1641.52 1320.2V1241.65H1642.65V1320.2ZM1642.65 1320.2V1241.65H1643.77V1320.2ZM1643.77 1320.2V1241.65H1644.89V1320.2ZM1644.89 1320.2V1196.76H1646.01V1320.2ZM1646.01 1320.2V1241.65H1647.13V1320.2ZM1647.13 1320.2V1241.65H1648.25V1320.2ZM1648.25 1320.2V1241.65H1649.38V1320.2ZM1649.38 1320.2V1241.65H1650.5V1320.2ZM1650.5 1320.2V1241.65H1651.62V1320.2ZM1651.62 1320.2V1230.42H1652.74V1320.2ZM1652.74 1320.2V1230.42H1653.86V1320.2ZM1653.86 1320.2V1230.42H1654.99V1320.2ZM1654.99 1320.2V1230.42H1656.11V1320.2ZM1656.11 1320.2V1241.65H1657.23V1320.2ZM1657.23 1320.2V1241.65H1658.35V1320.2ZM1658.35 1320.2V1241.65H1659.47V1320.2ZM1659.47 1320.2V1241.65H1660.6V1320.2ZM1660.6 1320.2V1241.65H1661.72V1320.2ZM1661.72 1320.2V1241.65H1662.84V1320.2ZM1662.84 1320.2V1241.65H1663.96V1320.2ZM1663.96 1320.2V1241.65H1665.08V1320.2ZM1665.08 1320.2V1241.65H1666.2V1320.2ZM1666.2 1320.2V1241.65H1667.33V1320.2ZM1667.33 1320.2V1241.65H1668.45V1320.2ZM1668.45 1320.2V1241.65H1669.57V1320.2ZM1669.57 1320.2V1241.65H1670.69V1320.2ZM1670.69 1320.2V1252.87H1671.81V1320.2ZM1671.81 1320.2V1252.87H1672.94V1320.2ZM1672.94 1320.2V1252.87H1674.06V1320.2ZM1674.06 1320.2V1252.87H1675.18V1320.2ZM1675.18 1320.2V1252.87H1676.3V1320.2Z"/>
<rect x="154" y="815.21" width="1.5" height="505.99" fill="#666"/>
<rect x="155" y="1319.5" width="2262.3" height="1.5" fill="#707070"/>
<rect x="155.5" y="1322" width="1.2" height="10" fill="#b0b0b0"/>
<rect x="478.5" y="1322" width="1.2" height="10" fill="#b0b0b0"/>
<rect x="801.5" y="1322" width="1.2" height="10" fill="#b0b0b0"/>
<rect x="1124.5" y="1322" width="1.2" height="10" fill="#b0b0b0"/>
<rect x="1447.5" y="1322" width="1.2" height="10" fill="#b0b0b0"/>
<rect x="1770.5" y="1322" width="1.2" height="10" fill="#b0b0b0"/>
<rect x="2093.5" y="1322" width="1.2" height="10" fill="#b0b0b0"/>
<rect x="2416.5" y="1322" width="1.2" height="10" fill="#b0b0b0"/>
<text transform="translate(156.6,1357) scale(1.11,1)" font-size="21" fill="#111" stroke="#111" stroke-width="0.3" text-anchor="middle">lun. 06</text>
<text transform="translate(479.7,1357) scale(1.11,1)" font-size="21" fill="#111" stroke="#111" stroke-width="0.3" text-anchor="middle">mar. 07</text>
<text transform="translate(802.8,1357) scale(1.11,1)" font-size="21" fill="#111" stroke="#111" stroke-width="0.3" text-anchor="middle">mer. 08</text>
<text transform="translate(1125.9,1357) scale(1.11,1)" font-size="21" fill="#111" stroke="#111" stroke-width="0.3" text-anchor="middle">jeu. 09</text>
<text transform="translate(1449,1357) scale(1.11,1)" font-size="21" fill="#111" stroke="#111" stroke-width="0.3" text-anchor="middle">ven. 10</text>
<text transform="translate(1772.1,1357) scale(1.11,1)" font-size="21" fill="#111" stroke="#111" stroke-width="0.3" text-anchor="middle">sam. 11</text>
<text transform="translate(2095.2,1357) scale(1.11,1)" font-size="21" fill="#111" stroke="#111" stroke-width="0.3" text-anchor="middle">dim. 12</text>
<text transform="translate(133,1326) scale(1.13,1)" font-size="20.5" fill="#333" text-anchor="end">0</text>
<text transform="translate(133,1269.89) scale(1.13,1)" font-size="20.5" fill="#333" text-anchor="end">5</text>
<text transform="translate(133,1213.78) scale(1.13,1)" font-size="20.5" fill="#333" text-anchor="end">10</text>
<text transform="translate(133,1157.67) scale(1.13,1)" font-size="20.5" fill="#333" text-anchor="end">15</text>
<text transform="translate(133,1101.56) scale(1.13,1)" font-size="20.5" fill="#333" text-anchor="end">20</text>
<text transform="translate(133,1045.45) scale(1.13,1)" font-size="20.5" fill="#333" text-anchor="end">25</text>
<text transform="translate(133,989.34) scale(1.13,1)" font-size="20.5" fill="#333" text-anchor="end">30</text>
<text transform="translate(133,933.23) scale(1.13,1)" font-size="20.5" fill="#333" text-anchor="end">35</text>
<text transform="translate(133,877.12) scale(1.13,1)" font-size="20.5" fill="#333" text-anchor="end">40</text>
<text transform="translate(133,821.01) scale(1.13,1)" font-size="20.5" fill="#333" text-anchor="end">45</text>
<text transform="translate(85.5,1067.3) rotate(-90)" font-size="21.5" fill="#333" text-anchor="middle">kW</text>
<path d="M1990 62 H2406 V88.7 Q2406 97.7 2397 97.7 H1999 Q1990 97.7 1990 88.7 Z" fill="#fff"/>
<text x="2112" y="89.2" font-size="25" font-weight="bold" fill="#111" textLength="172" lengthAdjust="spacingAndGlyphs">LHB-site-L367</text>
<rect x="1991.95" y="107.75" width="412.1" height="57.9" rx="9" fill="#fff" stroke="#7b7b7b" stroke-width="3.5"/>
<text x="2059.5" y="148.4" font-size="28" fill="#111" textLength="296" lengthAdjust="spacingAndGlyphs" xml:space="preserve">Consommation: 23 kWh</text>
<rect x="1991.95" y="178.05" width="412.1" height="56.9" rx="9" fill="#fff" stroke="#7b7b7b" stroke-width="3.5"/>
<text x="2121" y="218.5" font-size="28" fill="#111" textLength="173" lengthAdjust="spacingAndGlyphs" xml:space="preserve">P Max :  2 kW</text>
<rect x="1991.95" y="248.45" width="412.1" height="56.8" rx="9" fill="#fff" stroke="#7b7b7b" stroke-width="3.5"/>
<text x="2128.7" y="289" font-size="28" fill="#111" textLength="158.6" lengthAdjust="spacingAndGlyphs" xml:space="preserve">P min : 0 kW</text>
<rect x="562.15" y="806.05" width="411.7" height="57.5" rx="9" fill="#fff" stroke="#7b7b7b" stroke-width="3.5"/>
<text x="622.6" y="846" font-size="28" fill="#111" textLength="310" lengthAdjust="spacingAndGlyphs" xml:space="preserve">Consommation: 793 kWh</text>
<rect x="1099.75" y="806.05" width="411.5" height="57.5" rx="9" fill="#fff" stroke="#7b7b7b" stroke-width="3.5"/>
<text x="1221.7" y="846" font-size="28" fill="#111" textLength="189.3" lengthAdjust="spacingAndGlyphs" xml:space="preserve">P Max :  42 kW</text>
<rect x="1610.55" y="806.05" width="410.5" height="57.5" rx="9" fill="#fff" stroke="#7b7b7b" stroke-width="3.5"/>
<text x="1746" y="846" font-size="28" fill="#111" textLength="160" lengthAdjust="spacingAndGlyphs" xml:space="preserve">P min : 0 kW</text>
<rect x="1047.8" y="542.3" width="522" height="69.7" rx="10" fill="#fff" fill-opacity="0.9"/>
<text x="1138" y="589" font-size="30" font-weight="bold" fill="#111" textLength="352.5" lengthAdjust="spacingAndGlyphs">dimanche 12 avril 2026</text>
<rect x="176.5" y="49" width="481.7" height="77.7" fill="#0a0a18"/>
<text x="188" y="110" font-size="56" font-weight="bold" fill="url(#ecog)" textLength="83" lengthAdjust="spacingAndGlyphs">éco</text>
<text x="272" y="110" font-size="56" font-weight="bold" fill="#fff" textLength="101" lengthAdjust="spacingAndGlyphs">watt</text>
<path d="M305.5 100 L314.8 67.8" stroke="#fff" stroke-width="6.5" stroke-linecap="round"/>
<ellipse cx="433.8" cy="89" rx="26" ry="28" fill="#00b4e2"/>
<text x="434" y="97.5" font-size="25" fill="#fff" text-anchor="middle" textLength="32" lengthAdjust="spacingAndGlyphs">Rte</text>
<g font-size="10.5" fill="#00a9de"><text x="468" y="79" textLength="50" lengthAdjust="spacingAndGlyphs">Le réseau</text><text x="468" y="92" textLength="61" lengthAdjust="spacingAndGlyphs">de transport</text><text x="468" y="105" textLength="57" lengthAdjust="spacingAndGlyphs">d’électricité</text></g>
<rect x="546.2" y="61.1" width="100.8" height="55.9" fill="#fff"/>
<rect x="553" y="68.5" width="6.5" height="7" fill="#1f3a8f"/><rect x="559.5" y="68.5" width="5.5" height="7" fill="#fff"/><rect x="565" y="68.5" width="6.5" height="7" fill="#e1000f"/>
<g font-size="7.5" font-weight="bold" fill="#222"><text x="552.5" y="85" textLength="44" lengthAdjust="spacingAndGlyphs">RÉPUBLIQUE</text><text x="552.5" y="93" textLength="41" lengthAdjust="spacingAndGlyphs">FRANÇAISE</text></g>
<g font-size="3.5" font-style="italic" fill="#555"><text x="553" y="99">Liberté</text><text x="553" y="104">Égalité</text><text x="553" y="109">Fraternité</text></g>
<rect x="606.8" y="66.4" width="35" height="45.5" fill="#fff" stroke="#3a6fc0" stroke-width="1"/>
<text x="624.3" y="74.5" font-size="6.5" font-weight="bold" fill="#e2001a" text-anchor="middle" textLength="25" lengthAdjust="spacingAndGlyphs">ADEME</text>
<circle cx="624.3" cy="86.4" r="8.3" fill="#2653a8"/>
<g fill="#e2001a"><rect x="611.5" y="99" width="25.5" height="1.6"/><rect x="611.5" y="102.5" width="25.5" height="1.6"/><rect x="611.5" y="106" width="25.5" height="1.6"/></g>
<rect x="169.3" y="135.4" width="491.4" height="3.6" fill="#d9d9d9"/>
<rect x="169.3" y="189.2" width="491.4" height="5.2" fill="#d9d9d9"/>
<rect x="169.3" y="253" width="491.4" height="5.6" fill="#d9d9d9"/>
<rect x="169.3" y="135.4" width="3.7" height="123.2" fill="#d9d9d9"/>
<rect x="289" y="135.4" width="5" height="123.2" fill="#d9d9d9"/>
<rect x="411.2" y="135.4" width="5.2" height="123.2" fill="#d9d9d9"/>
<rect x="533" y="135.4" width="5.5" height="123.2" fill="#d9d9d9"/>
<rect x="655.6" y="135.4" width="5.1" height="123.2" fill="#d9d9d9"/>
<rect x="173" y="139" width="116" height="50.2" fill="#f2f2f2"/>
<rect x="294" y="139" width="117" height="50.2" fill="#f2f2f2"/>
<rect x="416.4" y="139" width="116.6" height="50.2" fill="#f2f2f2"/>
<rect x="538.5" y="139" width="117.1" height="50.2" fill="#f2f2f2"/>
<rect x="180.2" y="195.4" width="105.6" height="54.4" fill="url(#tealg)"/>
<path fill="#00f2cb" d="M195.72 195.4 C220.33 213.9 252.01 225.86 285.8 211.72 L285.8 195.4 Z"/>
<path fill="#00a68c" d="M208.71 195.4 C229.83 207.37 262.57 210.09 285.8 199.21 L285.8 195.4 Z"/>
<rect x="301.9" y="195.9" width="106.1" height="55.9" fill="url(#tealg)"/>
<path fill="#00f2cb" d="M317.5 195.9 C342.22 214.91 374.05 227.2 408 212.67 L408 195.9 Z"/>
<path fill="#00a68c" d="M330.55 195.9 C351.77 208.2 384.66 210.99 408 199.81 L408 195.9 Z"/>
<rect x="424.2" y="195.9" width="106.1" height="55.9" fill="url(#tealg)"/>
<path fill="#00f2cb" d="M439.8 195.9 C464.52 214.91 496.35 227.2 530.3 212.67 L530.3 195.9 Z"/>
<path fill="#00a68c" d="M452.85 195.9 C474.07 208.2 506.96 210.99 530.3 199.81 L530.3 195.9 Z"/>
<rect x="543.7" y="195.9" width="106.2" height="55.9" fill="url(#tealg)"/>
<path fill="#00f2cb" d="M559.31 195.9 C584.06 214.91 615.92 227.2 649.9 212.67 L649.9 195.9 Z"/>
<path fill="#00a68c" d="M572.37 195.9 C593.61 208.2 626.54 210.99 649.9 199.81 L649.9 195.9 Z"/>
<path d="M238.2 150.8 V166.8 C238.2 172.6 235.2 175.3 231 175.3 C227 175.3 224.4 172.8 223.8 168.6" fill="none" stroke="#111" stroke-width="3.3"/>
<path d="M328.3 150.8 V166.8 C328.3 172.6 325.3 175.3 321.1 175.3 C317.1 175.3 314.5 172.8 313.9 168.6" fill="none" stroke="#111" stroke-width="3.3"/>
<path d="M347 164.2 H361.4 M354.2 155.4 V173" fill="none" stroke="#111" stroke-width="2.6"/>
<path d="M387.7 151 V175.3 M380.8 157.8 L387.2 151.8" fill="none" stroke="#111" stroke-width="2.9"/>
<path d="M450.1 150.8 V166.8 C450.1 172.6 447.1 175.3 442.9 175.3 C438.9 175.3 436.3 172.8 435.7 168.6" fill="none" stroke="#111" stroke-width="3.3"/>
<path d="M468.8 164.2 H483.2 M476 155.4 V173" fill="none" stroke="#111" stroke-width="2.6"/>
<text x="509" y="175.5" font-size="33" font-weight="bold" fill="#111" text-anchor="middle">2</text>
<path d="M571.8 150.8 V166.8 C571.8 172.6 568.8 175.3 564.6 175.3 C560.6 175.3 558 172.8 557.4 168.6" fill="none" stroke="#111" stroke-width="3.3"/>
<path d="M590.4 164.2 H604.8 M597.6 155.4 V173" fill="none" stroke="#111" stroke-width="2.6"/>
<text x="631" y="175.5" font-size="33" font-weight="bold" fill="#111" text-anchor="middle">3</text>
<rect x="2322" y="1322" width="115.8" height="59.4" fill="#fff"/>
<path d="M2360.8 1341.8 A12.6 12.6 0 1 0 2362.6 1351.2 L2348.6 1351.2" fill="none" stroke="#0a70b9" stroke-width="4.8" stroke-linecap="round"/>
<path d="M2370 1347.5 C2368.5 1340 2373 1337.6 2377 1337.8 C2382.5 1338 2385 1342 2384.5 1346 C2384 1350 2378 1354 2370.5 1360.8 L2385.7 1360.8" fill="none" stroke="#0a70b9" stroke-width="4.8" stroke-linecap="round" stroke-linejoin="round"/>
<path d="M2392.4 1324.7 L2383.8 1337.6 L2391.5 1338.8 L2388.8 1363 L2400 1339.5 L2393 1338.4 L2394.8 1326 Z" fill="#e85a24"/>
<g fill="#f29222"><path d="M2402 1339 H2424.4 L2419 1344.9 H2400.8 Z"/><path d="M2398.3 1348.2 H2418.5 L2413 1353.7 H2396.6 Z"/><path d="M2395 1357.5 H2416.8 L2411.3 1363 H2393.3 Z"/></g>
<text x="2394" y="1335.2" font-size="6.5" font-weight="bold" fill="#ea5b24" textLength="30.5" lengthAdjust="spacingAndGlyphs">FRANCE</text>
<text x="2339.5" y="1368.4" font-size="4" fill="#3a8ad0" textLength="74.5" lengthAdjust="spacingAndGlyphs">Optimisation des ressources énergétiques</text>
</svg></body></html>
